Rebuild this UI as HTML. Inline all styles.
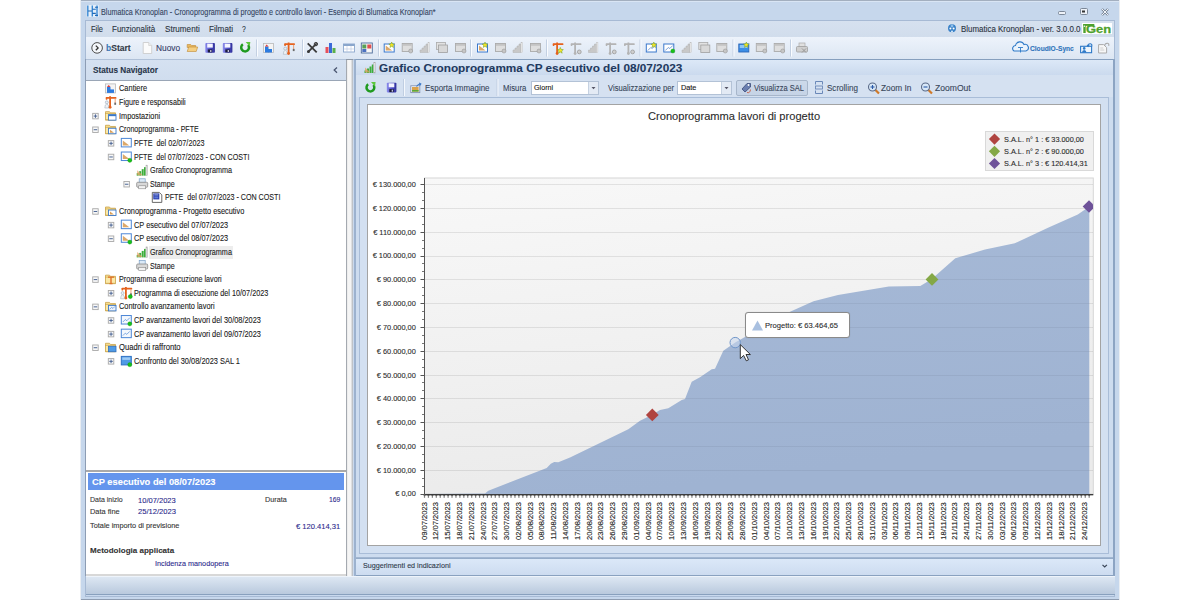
<!DOCTYPE html>
<html><head><meta charset="utf-8"><style>
html,body{margin:0;padding:0;width:1200px;height:600px;overflow:hidden;background:#fff;position:relative;font-family:'Liberation Sans', sans-serif;}
svg{position:absolute;overflow:visible}
</style></head><body>
<div style="position:absolute;left:81px;top:0px;width:1038px;height:600px;background:#c6d7ec;"></div><div style="position:absolute;left:81px;top:0px;width:1038px;height:1px;background:#a3afbf;"></div><div style="position:absolute;left:81px;top:1px;width:1038px;height:1px;background:#d9e5f4;"></div><div style="position:absolute;left:81px;top:599px;width:1038px;height:1px;background:#8e9cb0;"></div><div style="position:absolute;left:80px;top:0px;width:1px;height:600px;background:#e9edf2;"></div><div style="position:absolute;left:1119px;top:0px;width:1px;height:600px;background:#e9edf2;"></div><span style="position:absolute;left:101.00px;top:8.00px;font-family:'Liberation Sans', sans-serif;font-size:8.5px;font-weight:400;color:#34445e;white-space:nowrap;line-height:1;transform-origin:0 0;transform:scaleX(0.8512);-webkit-text-stroke:0.1px #34445e;">Blumatica Kronoplan - Cronoprogramma di progetto e controllo lavori - Esempio di Blumatica Kronoplan*</span><div style="position:absolute;left:85px;top:20px;width:1030px;height:577px;background:#c9d9ee;border:1px solid #a7bad4;box-sizing:border-box;"></div><div style="position:absolute;left:86px;top:21px;width:1028px;height:16px;background:linear-gradient(#d6e1ef,#d1ddec);"></div><span style="position:absolute;left:91.00px;top:25.00px;font-family:'Liberation Sans', sans-serif;font-size:8.3px;font-weight:400;color:#2a3340;white-space:nowrap;line-height:1;transform-origin:0 0;transform:scaleX(0.8972);-webkit-text-stroke:0.1px #2a3340;">File</span><span style="position:absolute;left:112.00px;top:25.00px;font-family:'Liberation Sans', sans-serif;font-size:8.3px;font-weight:400;color:#2a3340;white-space:nowrap;line-height:1;transform-origin:0 0;transform:scaleX(0.9654);-webkit-text-stroke:0.1px #2a3340;">Funzionalità</span><span style="position:absolute;left:164.50px;top:25.00px;font-family:'Liberation Sans', sans-serif;font-size:8.3px;font-weight:400;color:#2a3340;white-space:nowrap;line-height:1;transform-origin:0 0;transform:scaleX(0.9770);-webkit-text-stroke:0.1px #2a3340;">Strumenti</span><span style="position:absolute;left:208.70px;top:25.00px;font-family:'Liberation Sans', sans-serif;font-size:8.3px;font-weight:400;color:#2a3340;white-space:nowrap;line-height:1;transform-origin:0 0;transform:scaleX(0.9821);-webkit-text-stroke:0.1px #2a3340;">Filmati</span><span style="position:absolute;left:241.70px;top:25.00px;font-family:'Liberation Sans', sans-serif;font-size:8.3px;font-weight:400;color:#2a3340;white-space:nowrap;line-height:1;transform-origin:0 0;transform:scaleX(0.8216);-webkit-text-stroke:0.1px #2a3340;">?</span><span style="position:absolute;left:960.80px;top:25.00px;font-family:'Liberation Sans', sans-serif;font-size:8.3px;font-weight:400;color:#2a3340;white-space:nowrap;line-height:1;transform-origin:0 0;transform:scaleX(0.9561);-webkit-text-stroke:0.1px #2a3340;">Blumatica Kronoplan - ver. 3.0.0.0</span><div style="position:absolute;left:1082px;top:23px;width:30px;height:11px;background:#fff;"></div><svg width="1200" height="600" style="left:0;top:0"><rect x="1083.3" y="24" width="2.4" height="9" fill="#4ea12e"/><rect x="1083.3" y="24" width="11" height="1.9" fill="#4ea12e"/><rect x="1083.8" y="25.6" width="1.2" height="1.2" fill="#fff"/></svg><span style="position:absolute;left:1085.80px;top:24.00px;font-family:'Liberation Sans', sans-serif;font-size:11.5px;font-weight:700;color:#4ea12e;white-space:nowrap;line-height:1;transform-origin:0 0;transform:scaleX(1.1263);-webkit-text-stroke:0.1px #4ea12e;-webkit-text-stroke:0.3px #4ea12e;">Gen</span><div style="position:absolute;left:86px;top:37px;width:1028px;height:23px;background:linear-gradient(#edf3fb,#dce6f3);border-bottom:1px solid #b0c1d8;box-sizing:border-box;"></div><span style="position:absolute;left:105.70px;top:44.00px;font-family:'Liberation Sans', sans-serif;font-size:8.5px;font-weight:700;color:#333c48;white-space:nowrap;line-height:1;transform-origin:0 0;transform:scaleX(1.0009);-webkit-text-stroke:0.1px #333c48;"><span style="color:#3c7fc6">b</span>Start</span><span style="position:absolute;left:155.70px;top:44.00px;font-family:'Liberation Sans', sans-serif;font-size:8.5px;font-weight:400;color:#343c66;white-space:nowrap;line-height:1;transform-origin:0 0;transform:scaleX(0.9805);-webkit-text-stroke:0.1px #343c66;">Nuovo</span><span style="position:absolute;left:1030.00px;top:45.00px;font-family:'Liberation Sans', sans-serif;font-size:7px;font-weight:700;color:#2f74bb;white-space:nowrap;line-height:1;transform-origin:0 0;transform:scaleX(0.9464);-webkit-text-stroke:0.1px #2f74bb;">CloudIO-Sync</span><div style="position:absolute;left:86px;top:60px;width:260px;height:21px;background:linear-gradient(#d5e1f1,#d0ddee);border-bottom:1px solid #9aa6b6;box-sizing:border-box;"></div><span style="position:absolute;left:92.70px;top:66.00px;font-family:'Liberation Sans', sans-serif;font-size:8.5px;font-weight:700;color:#27354a;white-space:nowrap;line-height:1;transform-origin:0 0;transform:scaleX(0.9608);-webkit-text-stroke:0.1px #27354a;">Status Navigator</span><div style="position:absolute;left:86px;top:81px;width:260px;height:390px;background:#fff;"></div><div style="position:absolute;left:86px;top:470px;width:260px;height:2px;background:#a9a9a9;"></div><div style="position:absolute;left:86px;top:472px;width:260px;height:103px;background:#fff;"></div><div style="position:absolute;left:88px;top:473px;width:256px;height:17px;background:#6495ed;"></div><span style="position:absolute;left:91.50px;top:477.00px;font-family:'Liberation Sans', sans-serif;font-size:9.5px;font-weight:700;color:#ffffff;white-space:nowrap;line-height:1;transform-origin:0 0;transform:scaleX(0.9798);-webkit-text-stroke:0.1px #ffffff;">CP esecutivo del 08/07/2023</span><span style="position:absolute;left:89.80px;top:496.00px;font-family:'Liberation Sans', sans-serif;font-size:7.5px;font-weight:400;color:#333;white-space:nowrap;line-height:1;transform-origin:0 0;transform:scaleX(0.9335);-webkit-text-stroke:0.1px #333;">Data inizio</span><span style="position:absolute;left:138.00px;top:497.00px;font-family:'Liberation Sans', sans-serif;font-size:7.5px;font-weight:400;color:#2b2a8c;white-space:nowrap;line-height:1;transform-origin:0 0;transform:scaleX(1.0041);-webkit-text-stroke:0.1px #2b2a8c;">10/07/2023</span><span style="position:absolute;left:264.90px;top:496.00px;font-family:'Liberation Sans', sans-serif;font-size:7.5px;font-weight:400;color:#333;white-space:nowrap;line-height:1;transform-origin:0 0;transform:scaleX(0.9638);-webkit-text-stroke:0.1px #333;">Durata</span><span style="position:absolute;left:328.60px;top:496.00px;font-family:'Liberation Sans', sans-serif;font-size:7.5px;font-weight:400;color:#2b2a8c;white-space:nowrap;line-height:1;transform-origin:0 0;transform:scaleX(0.9109);-webkit-text-stroke:0.1px #2b2a8c;">169</span><span style="position:absolute;left:89.80px;top:508.00px;font-family:'Liberation Sans', sans-serif;font-size:7.5px;font-weight:400;color:#333;white-space:nowrap;line-height:1;transform-origin:0 0;transform:scaleX(0.9890);-webkit-text-stroke:0.1px #333;">Data fine</span><span style="position:absolute;left:137.70px;top:508.00px;font-family:'Liberation Sans', sans-serif;font-size:7.5px;font-weight:400;color:#2b2a8c;white-space:nowrap;line-height:1;transform-origin:0 0;transform:scaleX(1.0121);-webkit-text-stroke:0.1px #2b2a8c;">25/12/2023</span><span style="position:absolute;left:89.80px;top:522.00px;font-family:'Liberation Sans', sans-serif;font-size:7.5px;font-weight:400;color:#333;white-space:nowrap;line-height:1;transform-origin:0 0;transform:scaleX(0.9792);-webkit-text-stroke:0.1px #333;">Totale importo di previsione</span><span style="position:absolute;left:295.90px;top:523.00px;font-family:'Liberation Sans', sans-serif;font-size:7.5px;font-weight:400;color:#2b2a8c;white-space:nowrap;line-height:1;transform-origin:0 0;transform:scaleX(1.0069);-webkit-text-stroke:0.1px #2b2a8c;">€ 120.414,31</span><span style="position:absolute;left:90.30px;top:547.00px;font-family:'Liberation Sans', sans-serif;font-size:8px;font-weight:700;color:#333;white-space:nowrap;line-height:1;transform-origin:0 0;transform:scaleX(1.0022);-webkit-text-stroke:0.1px #333;">Metodologia applicata</span><span style="position:absolute;left:154.50px;top:560.00px;font-family:'Liberation Sans', sans-serif;font-size:7.5px;font-weight:400;color:#2b2a8c;white-space:nowrap;line-height:1;transform-origin:0 0;transform:scaleX(0.9658);-webkit-text-stroke:0.1px #2b2a8c;">Incidenza manodopera</span><div style="position:absolute;left:86px;top:574px;width:260px;height:2px;background:#d8d8d8;"></div><div style="position:absolute;left:85px;top:59px;width:1px;height:517px;background:#8d9db4;"></div><div style="position:absolute;left:346px;top:59px;width:7px;height:517px;background:linear-gradient(90deg,#a4a9b0 0,#a4a9b0 1px,#e4e4e4 1px,#f6f6f6 2px,#f4f4f4 5px,#c6c9cd 6px,#b8bcc2 7px);border-top:1px solid #8e98a6;box-sizing:border-box;"></div><div style="position:absolute;left:354px;top:59px;width:760px;height:518px;background:#cddcef;border-left:2px solid #9cb2cf;border-top:1px solid #869fbe;box-sizing:border-box;"></div><div style="position:absolute;left:356px;top:60px;width:758px;height:16px;background:linear-gradient(#dce8f7,#cbdaee);border-bottom:1px solid #aabdd6;box-sizing:border-box;"></div><span style="position:absolute;left:378.70px;top:63.00px;font-family:'Liberation Sans', sans-serif;font-size:11.5px;font-weight:700;color:#1f3a5f;white-space:nowrap;line-height:1;transform-origin:0 0;transform:scaleX(1.0234);-webkit-text-stroke:0.1px #1f3a5f;">Grafico Cronoprogramma CP esecutivo del 08/07/2023</span><div style="position:absolute;left:356px;top:75px;width:758px;height:22px;background:#d5e1f1;"></div><span style="position:absolute;left:424.50px;top:84.00px;font-family:'Liberation Sans', sans-serif;font-size:8.3px;font-weight:400;color:#38465a;white-space:nowrap;line-height:1;transform-origin:0 0;transform:scaleX(0.9580);-webkit-text-stroke:0.1px #38465a;">Esporta Immagine</span><span style="position:absolute;left:503.30px;top:84.00px;font-family:'Liberation Sans', sans-serif;font-size:8.3px;font-weight:400;color:#38465a;white-space:nowrap;line-height:1;transform-origin:0 0;transform:scaleX(0.9395);-webkit-text-stroke:0.1px #38465a;">Misura</span><span style="position:absolute;left:607.60px;top:84.00px;font-family:'Liberation Sans', sans-serif;font-size:8.3px;font-weight:400;color:#38465a;white-space:nowrap;line-height:1;transform-origin:0 0;transform:scaleX(0.9251);-webkit-text-stroke:0.1px #38465a;">Visualizzazione per</span><div style="position:absolute;left:531px;top:81px;width:68px;height:14px;background:#fff;border:1px solid #b3c2d6;box-sizing:border-box;"></div><div style="position:absolute;left:588px;top:82px;width:10px;height:12px;background:#e3eaf4;border-left:1px solid #c5d1e1;box-sizing:border-box;"></div><span style="position:absolute;left:533.80px;top:84.00px;font-family:'Liberation Sans', sans-serif;font-size:7.5px;font-weight:400;color:#111;white-space:nowrap;line-height:1;transform-origin:0 0;transform:scaleX(0.9543);-webkit-text-stroke:0.1px #111;">Giorni</span><div style="position:absolute;left:677px;top:81px;width:55px;height:14px;background:#fff;border:1px solid #b3c2d6;box-sizing:border-box;"></div><div style="position:absolute;left:721px;top:82px;width:10px;height:12px;background:#e3eaf4;border-left:1px solid #c5d1e1;box-sizing:border-box;"></div><span style="position:absolute;left:680.60px;top:84.00px;font-family:'Liberation Sans', sans-serif;font-size:7.5px;font-weight:400;color:#111;white-space:nowrap;line-height:1;transform-origin:0 0;transform:scaleX(0.9720);-webkit-text-stroke:0.1px #111;">Date</span><div style="position:absolute;left:736px;top:80px;width:72px;height:16px;background:linear-gradient(#ccd9ea,#c5d3e6);border:1px solid #a7b6ca;border-radius:2px;box-sizing:border-box;"></div><span style="position:absolute;left:753.80px;top:84.00px;font-family:'Liberation Sans', sans-serif;font-size:8.3px;font-weight:400;color:#38465a;white-space:nowrap;line-height:1;transform-origin:0 0;transform:scaleX(0.9039);-webkit-text-stroke:0.1px #38465a;">Visualizza SAL</span><span style="position:absolute;left:826.90px;top:84.00px;font-family:'Liberation Sans', sans-serif;font-size:8.3px;font-weight:400;color:#38465a;white-space:nowrap;line-height:1;transform-origin:0 0;transform:scaleX(0.9708);-webkit-text-stroke:0.1px #38465a;">Scrolling</span><span style="position:absolute;left:881.20px;top:84.00px;font-family:'Liberation Sans', sans-serif;font-size:8.3px;font-weight:400;color:#38465a;white-space:nowrap;line-height:1;transform-origin:0 0;transform:scaleX(0.9988);-webkit-text-stroke:0.1px #38465a;">Zoom In</span><span style="position:absolute;left:934.80px;top:84.00px;font-family:'Liberation Sans', sans-serif;font-size:8.3px;font-weight:400;color:#38465a;white-space:nowrap;line-height:1;transform-origin:0 0;transform:scaleX(1.0320);-webkit-text-stroke:0.1px #38465a;">ZoomOut</span><div style="position:absolute;left:1113px;top:59px;width:2px;height:518px;background:#8ca4c3;"></div><div style="position:absolute;left:359px;top:97px;width:750px;height:457px;background:#d3e0f1;border:1px solid #a9bdd8;box-sizing:border-box;"></div><div style="position:absolute;left:367px;top:104px;width:734px;height:442px;background:#fff;border:1px solid #a3a3a3;box-sizing:border-box;"></div><div style="position:absolute;left:356px;top:557px;width:757px;height:2px;background:linear-gradient(#a9bcd6,#8ea6c4);"></div><div style="position:absolute;left:356px;top:559px;width:757px;height:17px;background:linear-gradient(#dbe8f8,#cddcf0);border-bottom:1px solid #8aa2c0;box-sizing:border-box;"></div><span style="position:absolute;left:362.80px;top:562.00px;font-family:'Liberation Sans', sans-serif;font-size:8px;font-weight:400;color:#2b3748;white-space:nowrap;line-height:1;transform-origin:0 0;transform:scaleX(0.8943);-webkit-text-stroke:0.1px #2b3748;">Suggerimenti ed indicazioni</span><div style="position:absolute;left:86px;top:576px;width:1029px;height:19px;background:linear-gradient(#eef4fb 0,#eef4fb 1px,#dde7f3 1px,#b9c9dd 18px,#88a0bd 18px);"></div><svg width="1200" height="600" style="left:0;top:0"><defs><linearGradient id="pbg" x1="0" y1="0" x2="0.25" y2="1"><stop offset="0" stop-color="#f8f8f8"/><stop offset="1" stop-color="#ebebeb"/></linearGradient><linearGradient id="area" x1="0" y1="0" x2="0.3" y2="1"><stop offset="0" stop-color="#a7bad7"/><stop offset="1" stop-color="#9fb3d2"/></linearGradient></defs><rect x="424.5" y="178" width="668.8" height="316" fill="url(#pbg)" stroke="#d6d6d6" stroke-width="1"/><line x1="424.5" y1="470.5" x2="1093" y2="470.5" stroke="#000" stroke-opacity="0.085" stroke-width="1"/><line x1="424.5" y1="446.5" x2="1093" y2="446.5" stroke="#000" stroke-opacity="0.085" stroke-width="1"/><line x1="424.5" y1="422.5" x2="1093" y2="422.5" stroke="#000" stroke-opacity="0.085" stroke-width="1"/><line x1="424.5" y1="398.5" x2="1093" y2="398.5" stroke="#000" stroke-opacity="0.085" stroke-width="1"/><line x1="424.5" y1="375.5" x2="1093" y2="375.5" stroke="#000" stroke-opacity="0.085" stroke-width="1"/><line x1="424.5" y1="351.5" x2="1093" y2="351.5" stroke="#000" stroke-opacity="0.085" stroke-width="1"/><line x1="424.5" y1="327.5" x2="1093" y2="327.5" stroke="#000" stroke-opacity="0.085" stroke-width="1"/><line x1="424.5" y1="303.5" x2="1093" y2="303.5" stroke="#000" stroke-opacity="0.085" stroke-width="1"/><line x1="424.5" y1="279.5" x2="1093" y2="279.5" stroke="#000" stroke-opacity="0.085" stroke-width="1"/><line x1="424.5" y1="256.5" x2="1093" y2="256.5" stroke="#000" stroke-opacity="0.085" stroke-width="1"/><line x1="424.5" y1="232.5" x2="1093" y2="232.5" stroke="#000" stroke-opacity="0.085" stroke-width="1"/><line x1="424.5" y1="208.5" x2="1093" y2="208.5" stroke="#000" stroke-opacity="0.085" stroke-width="1"/><line x1="424.5" y1="184.5" x2="1093" y2="184.5" stroke="#000" stroke-opacity="0.085" stroke-width="1"/><path d="M424.5,494 L485,493.6 L488.3,490.7 L546.7,468 L550.8,463.7 L554.2,462 L558.3,462.2 L570,457.5 L628.3,429.2 L640,420.8 L651.7,415 L660,410 L668.3,408.3 L681.7,400 L685,399 L691.7,381.7 L700,377.3 L711.7,369.3 L715,368.7 L723.3,350.7 L735.2,342.6 L744.5,337.3 L790,311.7 L813.5,301.3 L838,295 L888.8,286.6 L920.3,285.9 L931.5,279.3 L955.3,258.3 L985,249.5 L1014.8,243.2 L1048,227.8 L1077.8,214.5 L1088.3,207.3 L1089.3,207.3 L1089.3,494 Z" fill="url(#area)"/><clipPath id="aclip"><path d="M424.5,494 L485,493.6 L488.3,490.7 L546.7,468 L550.8,463.7 L554.2,462 L558.3,462.2 L570,457.5 L628.3,429.2 L640,420.8 L651.7,415 L660,410 L668.3,408.3 L681.7,400 L685,399 L691.7,381.7 L700,377.3 L711.7,369.3 L715,368.7 L723.3,350.7 L735.2,342.6 L744.5,337.3 L790,311.7 L813.5,301.3 L838,295 L888.8,286.6 L920.3,285.9 L931.5,279.3 L955.3,258.3 L985,249.5 L1014.8,243.2 L1048,227.8 L1077.8,214.5 L1088.3,207.3 L1089.3,207.3 L1089.3,494 Z"/></clipPath><g clip-path="url(#aclip)"><line x1="424.5" y1="470.5" x2="1093" y2="470.5" stroke="#000" stroke-opacity="0.05" stroke-width="1"/><line x1="424.5" y1="446.5" x2="1093" y2="446.5" stroke="#000" stroke-opacity="0.05" stroke-width="1"/><line x1="424.5" y1="422.5" x2="1093" y2="422.5" stroke="#000" stroke-opacity="0.05" stroke-width="1"/><line x1="424.5" y1="398.5" x2="1093" y2="398.5" stroke="#000" stroke-opacity="0.05" stroke-width="1"/><line x1="424.5" y1="375.5" x2="1093" y2="375.5" stroke="#000" stroke-opacity="0.05" stroke-width="1"/><line x1="424.5" y1="351.5" x2="1093" y2="351.5" stroke="#000" stroke-opacity="0.05" stroke-width="1"/><line x1="424.5" y1="327.5" x2="1093" y2="327.5" stroke="#000" stroke-opacity="0.05" stroke-width="1"/><line x1="424.5" y1="303.5" x2="1093" y2="303.5" stroke="#000" stroke-opacity="0.05" stroke-width="1"/><line x1="424.5" y1="279.5" x2="1093" y2="279.5" stroke="#000" stroke-opacity="0.05" stroke-width="1"/><line x1="424.5" y1="256.5" x2="1093" y2="256.5" stroke="#000" stroke-opacity="0.05" stroke-width="1"/><line x1="424.5" y1="232.5" x2="1093" y2="232.5" stroke="#000" stroke-opacity="0.05" stroke-width="1"/><line x1="424.5" y1="208.5" x2="1093" y2="208.5" stroke="#000" stroke-opacity="0.05" stroke-width="1"/><line x1="424.5" y1="184.5" x2="1093" y2="184.5" stroke="#000" stroke-opacity="0.05" stroke-width="1"/></g><line x1="420.5" y1="494.5" x2="424.5" y2="494.5" stroke="#555" stroke-width="1"/><line x1="422" y1="486.5" x2="424.5" y2="486.5" stroke="#777" stroke-width="1"/><line x1="422" y1="478.5" x2="424.5" y2="478.5" stroke="#777" stroke-width="1"/><line x1="420.5" y1="470.5" x2="424.5" y2="470.5" stroke="#555" stroke-width="1"/><line x1="422" y1="462.5" x2="424.5" y2="462.5" stroke="#777" stroke-width="1"/><line x1="422" y1="454.5" x2="424.5" y2="454.5" stroke="#777" stroke-width="1"/><line x1="420.5" y1="446.5" x2="424.5" y2="446.5" stroke="#555" stroke-width="1"/><line x1="422" y1="438.5" x2="424.5" y2="438.5" stroke="#777" stroke-width="1"/><line x1="422" y1="430.5" x2="424.5" y2="430.5" stroke="#777" stroke-width="1"/><line x1="420.5" y1="422.5" x2="424.5" y2="422.5" stroke="#555" stroke-width="1"/><line x1="422" y1="414.5" x2="424.5" y2="414.5" stroke="#777" stroke-width="1"/><line x1="422" y1="406.5" x2="424.5" y2="406.5" stroke="#777" stroke-width="1"/><line x1="420.5" y1="398.5" x2="424.5" y2="398.5" stroke="#555" stroke-width="1"/><line x1="422" y1="390.5" x2="424.5" y2="390.5" stroke="#777" stroke-width="1"/><line x1="422" y1="382.5" x2="424.5" y2="382.5" stroke="#777" stroke-width="1"/><line x1="420.5" y1="375.5" x2="424.5" y2="375.5" stroke="#555" stroke-width="1"/><line x1="422" y1="367.5" x2="424.5" y2="367.5" stroke="#777" stroke-width="1"/><line x1="422" y1="359.5" x2="424.5" y2="359.5" stroke="#777" stroke-width="1"/><line x1="420.5" y1="351.5" x2="424.5" y2="351.5" stroke="#555" stroke-width="1"/><line x1="422" y1="343.5" x2="424.5" y2="343.5" stroke="#777" stroke-width="1"/><line x1="422" y1="335.5" x2="424.5" y2="335.5" stroke="#777" stroke-width="1"/><line x1="420.5" y1="327.5" x2="424.5" y2="327.5" stroke="#555" stroke-width="1"/><line x1="422" y1="319.5" x2="424.5" y2="319.5" stroke="#777" stroke-width="1"/><line x1="422" y1="311.5" x2="424.5" y2="311.5" stroke="#777" stroke-width="1"/><line x1="420.5" y1="303.5" x2="424.5" y2="303.5" stroke="#555" stroke-width="1"/><line x1="422" y1="295.5" x2="424.5" y2="295.5" stroke="#777" stroke-width="1"/><line x1="422" y1="287.5" x2="424.5" y2="287.5" stroke="#777" stroke-width="1"/><line x1="420.5" y1="279.5" x2="424.5" y2="279.5" stroke="#555" stroke-width="1"/><line x1="422" y1="271.5" x2="424.5" y2="271.5" stroke="#777" stroke-width="1"/><line x1="422" y1="263.5" x2="424.5" y2="263.5" stroke="#777" stroke-width="1"/><line x1="420.5" y1="256.5" x2="424.5" y2="256.5" stroke="#555" stroke-width="1"/><line x1="422" y1="248.5" x2="424.5" y2="248.5" stroke="#777" stroke-width="1"/><line x1="422" y1="240.5" x2="424.5" y2="240.5" stroke="#777" stroke-width="1"/><line x1="420.5" y1="232.5" x2="424.5" y2="232.5" stroke="#555" stroke-width="1"/><line x1="422" y1="224.5" x2="424.5" y2="224.5" stroke="#777" stroke-width="1"/><line x1="422" y1="216.5" x2="424.5" y2="216.5" stroke="#777" stroke-width="1"/><line x1="420.5" y1="208.5" x2="424.5" y2="208.5" stroke="#555" stroke-width="1"/><line x1="422" y1="200.5" x2="424.5" y2="200.5" stroke="#777" stroke-width="1"/><line x1="422" y1="192.5" x2="424.5" y2="192.5" stroke="#777" stroke-width="1"/><line x1="420.5" y1="184.5" x2="424.5" y2="184.5" stroke="#555" stroke-width="1"/><rect x="423.60" y="495" width="1.8" height="1" fill="#444" fill-opacity="0.8"/><rect x="423.90" y="496" width="1.2" height="1.8" fill="#6a6a6a" fill-opacity="0.85"/><rect x="427.53" y="495" width="1.8" height="1" fill="#444" fill-opacity="0.8"/><rect x="427.83" y="496" width="1.2" height="1.8" fill="#6a6a6a" fill-opacity="0.85"/><rect x="431.47" y="495" width="1.8" height="1" fill="#444" fill-opacity="0.8"/><rect x="431.77" y="496" width="1.2" height="1.8" fill="#6a6a6a" fill-opacity="0.85"/><rect x="435.40" y="495" width="1.8" height="1" fill="#444" fill-opacity="0.8"/><rect x="435.70" y="496" width="1.2" height="1.8" fill="#6a6a6a" fill-opacity="0.85"/><rect x="439.33" y="495" width="1.8" height="1" fill="#444" fill-opacity="0.8"/><rect x="439.63" y="496" width="1.2" height="1.8" fill="#6a6a6a" fill-opacity="0.85"/><rect x="443.27" y="495" width="1.8" height="1" fill="#444" fill-opacity="0.8"/><rect x="443.56" y="496" width="1.2" height="1.8" fill="#6a6a6a" fill-opacity="0.85"/><rect x="447.20" y="495" width="1.8" height="1" fill="#444" fill-opacity="0.8"/><rect x="447.50" y="496" width="1.2" height="1.8" fill="#6a6a6a" fill-opacity="0.85"/><rect x="451.13" y="495" width="1.8" height="1" fill="#444" fill-opacity="0.8"/><rect x="451.43" y="496" width="1.2" height="1.8" fill="#6a6a6a" fill-opacity="0.85"/><rect x="455.06" y="495" width="1.8" height="1" fill="#444" fill-opacity="0.8"/><rect x="455.36" y="496" width="1.2" height="1.8" fill="#6a6a6a" fill-opacity="0.85"/><rect x="459.00" y="495" width="1.8" height="1" fill="#444" fill-opacity="0.8"/><rect x="459.30" y="496" width="1.2" height="1.8" fill="#6a6a6a" fill-opacity="0.85"/><rect x="462.93" y="495" width="1.8" height="1" fill="#444" fill-opacity="0.8"/><rect x="463.23" y="496" width="1.2" height="1.8" fill="#6a6a6a" fill-opacity="0.85"/><rect x="466.86" y="495" width="1.8" height="1" fill="#444" fill-opacity="0.8"/><rect x="467.16" y="496" width="1.2" height="1.8" fill="#6a6a6a" fill-opacity="0.85"/><rect x="470.80" y="495" width="1.8" height="1" fill="#444" fill-opacity="0.8"/><rect x="471.10" y="496" width="1.2" height="1.8" fill="#6a6a6a" fill-opacity="0.85"/><rect x="474.73" y="495" width="1.8" height="1" fill="#444" fill-opacity="0.8"/><rect x="475.03" y="496" width="1.2" height="1.8" fill="#6a6a6a" fill-opacity="0.85"/><rect x="478.66" y="495" width="1.8" height="1" fill="#444" fill-opacity="0.8"/><rect x="478.96" y="496" width="1.2" height="1.8" fill="#6a6a6a" fill-opacity="0.85"/><rect x="482.60" y="495" width="1.8" height="1" fill="#444" fill-opacity="0.8"/><rect x="482.89" y="496" width="1.2" height="1.8" fill="#6a6a6a" fill-opacity="0.85"/><rect x="486.53" y="495" width="1.8" height="1" fill="#444" fill-opacity="0.8"/><rect x="486.83" y="496" width="1.2" height="1.8" fill="#6a6a6a" fill-opacity="0.85"/><rect x="490.46" y="495" width="1.8" height="1" fill="#444" fill-opacity="0.8"/><rect x="490.76" y="496" width="1.2" height="1.8" fill="#6a6a6a" fill-opacity="0.85"/><rect x="494.39" y="495" width="1.8" height="1" fill="#444" fill-opacity="0.8"/><rect x="494.69" y="496" width="1.2" height="1.8" fill="#6a6a6a" fill-opacity="0.85"/><rect x="498.33" y="495" width="1.8" height="1" fill="#444" fill-opacity="0.8"/><rect x="498.63" y="496" width="1.2" height="1.8" fill="#6a6a6a" fill-opacity="0.85"/><rect x="502.26" y="495" width="1.8" height="1" fill="#444" fill-opacity="0.8"/><rect x="502.56" y="496" width="1.2" height="1.8" fill="#6a6a6a" fill-opacity="0.85"/><rect x="506.19" y="495" width="1.8" height="1" fill="#444" fill-opacity="0.8"/><rect x="506.49" y="496" width="1.2" height="1.8" fill="#6a6a6a" fill-opacity="0.85"/><rect x="510.13" y="495" width="1.8" height="1" fill="#444" fill-opacity="0.8"/><rect x="510.43" y="496" width="1.2" height="1.8" fill="#6a6a6a" fill-opacity="0.85"/><rect x="514.06" y="495" width="1.8" height="1" fill="#444" fill-opacity="0.8"/><rect x="514.36" y="496" width="1.2" height="1.8" fill="#6a6a6a" fill-opacity="0.85"/><rect x="517.99" y="495" width="1.8" height="1" fill="#444" fill-opacity="0.8"/><rect x="518.29" y="496" width="1.2" height="1.8" fill="#6a6a6a" fill-opacity="0.85"/><rect x="521.93" y="495" width="1.8" height="1" fill="#444" fill-opacity="0.8"/><rect x="522.23" y="496" width="1.2" height="1.8" fill="#6a6a6a" fill-opacity="0.85"/><rect x="525.86" y="495" width="1.8" height="1" fill="#444" fill-opacity="0.8"/><rect x="526.16" y="496" width="1.2" height="1.8" fill="#6a6a6a" fill-opacity="0.85"/><rect x="529.79" y="495" width="1.8" height="1" fill="#444" fill-opacity="0.8"/><rect x="530.09" y="496" width="1.2" height="1.8" fill="#6a6a6a" fill-opacity="0.85"/><rect x="533.72" y="495" width="1.8" height="1" fill="#444" fill-opacity="0.8"/><rect x="534.02" y="496" width="1.2" height="1.8" fill="#6a6a6a" fill-opacity="0.85"/><rect x="537.66" y="495" width="1.8" height="1" fill="#444" fill-opacity="0.8"/><rect x="537.96" y="496" width="1.2" height="1.8" fill="#6a6a6a" fill-opacity="0.85"/><rect x="541.59" y="495" width="1.8" height="1" fill="#444" fill-opacity="0.8"/><rect x="541.89" y="496" width="1.2" height="1.8" fill="#6a6a6a" fill-opacity="0.85"/><rect x="545.52" y="495" width="1.8" height="1" fill="#444" fill-opacity="0.8"/><rect x="545.82" y="496" width="1.2" height="1.8" fill="#6a6a6a" fill-opacity="0.85"/><rect x="549.46" y="495" width="1.8" height="1" fill="#444" fill-opacity="0.8"/><rect x="549.76" y="496" width="1.2" height="1.8" fill="#6a6a6a" fill-opacity="0.85"/><rect x="553.39" y="495" width="1.8" height="1" fill="#444" fill-opacity="0.8"/><rect x="553.69" y="496" width="1.2" height="1.8" fill="#6a6a6a" fill-opacity="0.85"/><rect x="557.32" y="495" width="1.8" height="1" fill="#444" fill-opacity="0.8"/><rect x="557.62" y="496" width="1.2" height="1.8" fill="#6a6a6a" fill-opacity="0.85"/><rect x="561.25" y="495" width="1.8" height="1" fill="#444" fill-opacity="0.8"/><rect x="561.55" y="496" width="1.2" height="1.8" fill="#6a6a6a" fill-opacity="0.85"/><rect x="565.19" y="495" width="1.8" height="1" fill="#444" fill-opacity="0.8"/><rect x="565.49" y="496" width="1.2" height="1.8" fill="#6a6a6a" fill-opacity="0.85"/><rect x="569.12" y="495" width="1.8" height="1" fill="#444" fill-opacity="0.8"/><rect x="569.42" y="496" width="1.2" height="1.8" fill="#6a6a6a" fill-opacity="0.85"/><rect x="573.05" y="495" width="1.8" height="1" fill="#444" fill-opacity="0.8"/><rect x="573.35" y="496" width="1.2" height="1.8" fill="#6a6a6a" fill-opacity="0.85"/><rect x="576.99" y="495" width="1.8" height="1" fill="#444" fill-opacity="0.8"/><rect x="577.29" y="496" width="1.2" height="1.8" fill="#6a6a6a" fill-opacity="0.85"/><rect x="580.92" y="495" width="1.8" height="1" fill="#444" fill-opacity="0.8"/><rect x="581.22" y="496" width="1.2" height="1.8" fill="#6a6a6a" fill-opacity="0.85"/><rect x="584.85" y="495" width="1.8" height="1" fill="#444" fill-opacity="0.8"/><rect x="585.15" y="496" width="1.2" height="1.8" fill="#6a6a6a" fill-opacity="0.85"/><rect x="588.79" y="495" width="1.8" height="1" fill="#444" fill-opacity="0.8"/><rect x="589.09" y="496" width="1.2" height="1.8" fill="#6a6a6a" fill-opacity="0.85"/><rect x="592.72" y="495" width="1.8" height="1" fill="#444" fill-opacity="0.8"/><rect x="593.02" y="496" width="1.2" height="1.8" fill="#6a6a6a" fill-opacity="0.85"/><rect x="596.65" y="495" width="1.8" height="1" fill="#444" fill-opacity="0.8"/><rect x="596.95" y="496" width="1.2" height="1.8" fill="#6a6a6a" fill-opacity="0.85"/><rect x="600.59" y="495" width="1.8" height="1" fill="#444" fill-opacity="0.8"/><rect x="600.88" y="496" width="1.2" height="1.8" fill="#6a6a6a" fill-opacity="0.85"/><rect x="604.52" y="495" width="1.8" height="1" fill="#444" fill-opacity="0.8"/><rect x="604.82" y="496" width="1.2" height="1.8" fill="#6a6a6a" fill-opacity="0.85"/><rect x="608.45" y="495" width="1.8" height="1" fill="#444" fill-opacity="0.8"/><rect x="608.75" y="496" width="1.2" height="1.8" fill="#6a6a6a" fill-opacity="0.85"/><rect x="612.38" y="495" width="1.8" height="1" fill="#444" fill-opacity="0.8"/><rect x="612.68" y="496" width="1.2" height="1.8" fill="#6a6a6a" fill-opacity="0.85"/><rect x="616.32" y="495" width="1.8" height="1" fill="#444" fill-opacity="0.8"/><rect x="616.62" y="496" width="1.2" height="1.8" fill="#6a6a6a" fill-opacity="0.85"/><rect x="620.25" y="495" width="1.8" height="1" fill="#444" fill-opacity="0.8"/><rect x="620.55" y="496" width="1.2" height="1.8" fill="#6a6a6a" fill-opacity="0.85"/><rect x="624.18" y="495" width="1.8" height="1" fill="#444" fill-opacity="0.8"/><rect x="624.48" y="496" width="1.2" height="1.8" fill="#6a6a6a" fill-opacity="0.85"/><rect x="628.12" y="495" width="1.8" height="1" fill="#444" fill-opacity="0.8"/><rect x="628.42" y="496" width="1.2" height="1.8" fill="#6a6a6a" fill-opacity="0.85"/><rect x="632.05" y="495" width="1.8" height="1" fill="#444" fill-opacity="0.8"/><rect x="632.35" y="496" width="1.2" height="1.8" fill="#6a6a6a" fill-opacity="0.85"/><rect x="635.98" y="495" width="1.8" height="1" fill="#444" fill-opacity="0.8"/><rect x="636.28" y="496" width="1.2" height="1.8" fill="#6a6a6a" fill-opacity="0.85"/><rect x="639.92" y="495" width="1.8" height="1" fill="#444" fill-opacity="0.8"/><rect x="640.22" y="496" width="1.2" height="1.8" fill="#6a6a6a" fill-opacity="0.85"/><rect x="643.85" y="495" width="1.8" height="1" fill="#444" fill-opacity="0.8"/><rect x="644.15" y="496" width="1.2" height="1.8" fill="#6a6a6a" fill-opacity="0.85"/><rect x="647.78" y="495" width="1.8" height="1" fill="#444" fill-opacity="0.8"/><rect x="648.08" y="496" width="1.2" height="1.8" fill="#6a6a6a" fill-opacity="0.85"/><rect x="651.71" y="495" width="1.8" height="1" fill="#444" fill-opacity="0.8"/><rect x="652.01" y="496" width="1.2" height="1.8" fill="#6a6a6a" fill-opacity="0.85"/><rect x="655.65" y="495" width="1.8" height="1" fill="#444" fill-opacity="0.8"/><rect x="655.95" y="496" width="1.2" height="1.8" fill="#6a6a6a" fill-opacity="0.85"/><rect x="659.58" y="495" width="1.8" height="1" fill="#444" fill-opacity="0.8"/><rect x="659.88" y="496" width="1.2" height="1.8" fill="#6a6a6a" fill-opacity="0.85"/><rect x="663.51" y="495" width="1.8" height="1" fill="#444" fill-opacity="0.8"/><rect x="663.81" y="496" width="1.2" height="1.8" fill="#6a6a6a" fill-opacity="0.85"/><rect x="667.45" y="495" width="1.8" height="1" fill="#444" fill-opacity="0.8"/><rect x="667.75" y="496" width="1.2" height="1.8" fill="#6a6a6a" fill-opacity="0.85"/><rect x="671.38" y="495" width="1.8" height="1" fill="#444" fill-opacity="0.8"/><rect x="671.68" y="496" width="1.2" height="1.8" fill="#6a6a6a" fill-opacity="0.85"/><rect x="675.31" y="495" width="1.8" height="1" fill="#444" fill-opacity="0.8"/><rect x="675.61" y="496" width="1.2" height="1.8" fill="#6a6a6a" fill-opacity="0.85"/><rect x="679.25" y="495" width="1.8" height="1" fill="#444" fill-opacity="0.8"/><rect x="679.54" y="496" width="1.2" height="1.8" fill="#6a6a6a" fill-opacity="0.85"/><rect x="683.18" y="495" width="1.8" height="1" fill="#444" fill-opacity="0.8"/><rect x="683.48" y="496" width="1.2" height="1.8" fill="#6a6a6a" fill-opacity="0.85"/><rect x="687.11" y="495" width="1.8" height="1" fill="#444" fill-opacity="0.8"/><rect x="687.41" y="496" width="1.2" height="1.8" fill="#6a6a6a" fill-opacity="0.85"/><rect x="691.04" y="495" width="1.8" height="1" fill="#444" fill-opacity="0.8"/><rect x="691.34" y="496" width="1.2" height="1.8" fill="#6a6a6a" fill-opacity="0.85"/><rect x="694.98" y="495" width="1.8" height="1" fill="#444" fill-opacity="0.8"/><rect x="695.28" y="496" width="1.2" height="1.8" fill="#6a6a6a" fill-opacity="0.85"/><rect x="698.91" y="495" width="1.8" height="1" fill="#444" fill-opacity="0.8"/><rect x="699.21" y="496" width="1.2" height="1.8" fill="#6a6a6a" fill-opacity="0.85"/><rect x="702.84" y="495" width="1.8" height="1" fill="#444" fill-opacity="0.8"/><rect x="703.14" y="496" width="1.2" height="1.8" fill="#6a6a6a" fill-opacity="0.85"/><rect x="706.78" y="495" width="1.8" height="1" fill="#444" fill-opacity="0.8"/><rect x="707.08" y="496" width="1.2" height="1.8" fill="#6a6a6a" fill-opacity="0.85"/><rect x="710.71" y="495" width="1.8" height="1" fill="#444" fill-opacity="0.8"/><rect x="711.01" y="496" width="1.2" height="1.8" fill="#6a6a6a" fill-opacity="0.85"/><rect x="714.64" y="495" width="1.8" height="1" fill="#444" fill-opacity="0.8"/><rect x="714.94" y="496" width="1.2" height="1.8" fill="#6a6a6a" fill-opacity="0.85"/><rect x="718.57" y="495" width="1.8" height="1" fill="#444" fill-opacity="0.8"/><rect x="718.87" y="496" width="1.2" height="1.8" fill="#6a6a6a" fill-opacity="0.85"/><rect x="722.51" y="495" width="1.8" height="1" fill="#444" fill-opacity="0.8"/><rect x="722.81" y="496" width="1.2" height="1.8" fill="#6a6a6a" fill-opacity="0.85"/><rect x="726.44" y="495" width="1.8" height="1" fill="#444" fill-opacity="0.8"/><rect x="726.74" y="496" width="1.2" height="1.8" fill="#6a6a6a" fill-opacity="0.85"/><rect x="730.37" y="495" width="1.8" height="1" fill="#444" fill-opacity="0.8"/><rect x="730.67" y="496" width="1.2" height="1.8" fill="#6a6a6a" fill-opacity="0.85"/><rect x="734.31" y="495" width="1.8" height="1" fill="#444" fill-opacity="0.8"/><rect x="734.61" y="496" width="1.2" height="1.8" fill="#6a6a6a" fill-opacity="0.85"/><rect x="738.24" y="495" width="1.8" height="1" fill="#444" fill-opacity="0.8"/><rect x="738.54" y="496" width="1.2" height="1.8" fill="#6a6a6a" fill-opacity="0.85"/><rect x="742.17" y="495" width="1.8" height="1" fill="#444" fill-opacity="0.8"/><rect x="742.47" y="496" width="1.2" height="1.8" fill="#6a6a6a" fill-opacity="0.85"/><rect x="746.11" y="495" width="1.8" height="1" fill="#444" fill-opacity="0.8"/><rect x="746.41" y="496" width="1.2" height="1.8" fill="#6a6a6a" fill-opacity="0.85"/><rect x="750.04" y="495" width="1.8" height="1" fill="#444" fill-opacity="0.8"/><rect x="750.34" y="496" width="1.2" height="1.8" fill="#6a6a6a" fill-opacity="0.85"/><rect x="753.97" y="495" width="1.8" height="1" fill="#444" fill-opacity="0.8"/><rect x="754.27" y="496" width="1.2" height="1.8" fill="#6a6a6a" fill-opacity="0.85"/><rect x="757.91" y="495" width="1.8" height="1" fill="#444" fill-opacity="0.8"/><rect x="758.21" y="496" width="1.2" height="1.8" fill="#6a6a6a" fill-opacity="0.85"/><rect x="761.84" y="495" width="1.8" height="1" fill="#444" fill-opacity="0.8"/><rect x="762.14" y="496" width="1.2" height="1.8" fill="#6a6a6a" fill-opacity="0.85"/><rect x="765.77" y="495" width="1.8" height="1" fill="#444" fill-opacity="0.8"/><rect x="766.07" y="496" width="1.2" height="1.8" fill="#6a6a6a" fill-opacity="0.85"/><rect x="769.70" y="495" width="1.8" height="1" fill="#444" fill-opacity="0.8"/><rect x="770.00" y="496" width="1.2" height="1.8" fill="#6a6a6a" fill-opacity="0.85"/><rect x="773.64" y="495" width="1.8" height="1" fill="#444" fill-opacity="0.8"/><rect x="773.94" y="496" width="1.2" height="1.8" fill="#6a6a6a" fill-opacity="0.85"/><rect x="777.57" y="495" width="1.8" height="1" fill="#444" fill-opacity="0.8"/><rect x="777.87" y="496" width="1.2" height="1.8" fill="#6a6a6a" fill-opacity="0.85"/><rect x="781.50" y="495" width="1.8" height="1" fill="#444" fill-opacity="0.8"/><rect x="781.80" y="496" width="1.2" height="1.8" fill="#6a6a6a" fill-opacity="0.85"/><rect x="785.44" y="495" width="1.8" height="1" fill="#444" fill-opacity="0.8"/><rect x="785.74" y="496" width="1.2" height="1.8" fill="#6a6a6a" fill-opacity="0.85"/><rect x="789.37" y="495" width="1.8" height="1" fill="#444" fill-opacity="0.8"/><rect x="789.67" y="496" width="1.2" height="1.8" fill="#6a6a6a" fill-opacity="0.85"/><rect x="793.30" y="495" width="1.8" height="1" fill="#444" fill-opacity="0.8"/><rect x="793.60" y="496" width="1.2" height="1.8" fill="#6a6a6a" fill-opacity="0.85"/><rect x="797.24" y="495" width="1.8" height="1" fill="#444" fill-opacity="0.8"/><rect x="797.53" y="496" width="1.2" height="1.8" fill="#6a6a6a" fill-opacity="0.85"/><rect x="801.17" y="495" width="1.8" height="1" fill="#444" fill-opacity="0.8"/><rect x="801.47" y="496" width="1.2" height="1.8" fill="#6a6a6a" fill-opacity="0.85"/><rect x="805.10" y="495" width="1.8" height="1" fill="#444" fill-opacity="0.8"/><rect x="805.40" y="496" width="1.2" height="1.8" fill="#6a6a6a" fill-opacity="0.85"/><rect x="809.03" y="495" width="1.8" height="1" fill="#444" fill-opacity="0.8"/><rect x="809.33" y="496" width="1.2" height="1.8" fill="#6a6a6a" fill-opacity="0.85"/><rect x="812.97" y="495" width="1.8" height="1" fill="#444" fill-opacity="0.8"/><rect x="813.27" y="496" width="1.2" height="1.8" fill="#6a6a6a" fill-opacity="0.85"/><rect x="816.90" y="495" width="1.8" height="1" fill="#444" fill-opacity="0.8"/><rect x="817.20" y="496" width="1.2" height="1.8" fill="#6a6a6a" fill-opacity="0.85"/><rect x="820.83" y="495" width="1.8" height="1" fill="#444" fill-opacity="0.8"/><rect x="821.13" y="496" width="1.2" height="1.8" fill="#6a6a6a" fill-opacity="0.85"/><rect x="824.77" y="495" width="1.8" height="1" fill="#444" fill-opacity="0.8"/><rect x="825.07" y="496" width="1.2" height="1.8" fill="#6a6a6a" fill-opacity="0.85"/><rect x="828.70" y="495" width="1.8" height="1" fill="#444" fill-opacity="0.8"/><rect x="829.00" y="496" width="1.2" height="1.8" fill="#6a6a6a" fill-opacity="0.85"/><rect x="832.63" y="495" width="1.8" height="1" fill="#444" fill-opacity="0.8"/><rect x="832.93" y="496" width="1.2" height="1.8" fill="#6a6a6a" fill-opacity="0.85"/><rect x="836.56" y="495" width="1.8" height="1" fill="#444" fill-opacity="0.8"/><rect x="836.86" y="496" width="1.2" height="1.8" fill="#6a6a6a" fill-opacity="0.85"/><rect x="840.50" y="495" width="1.8" height="1" fill="#444" fill-opacity="0.8"/><rect x="840.80" y="496" width="1.2" height="1.8" fill="#6a6a6a" fill-opacity="0.85"/><rect x="844.43" y="495" width="1.8" height="1" fill="#444" fill-opacity="0.8"/><rect x="844.73" y="496" width="1.2" height="1.8" fill="#6a6a6a" fill-opacity="0.85"/><rect x="848.36" y="495" width="1.8" height="1" fill="#444" fill-opacity="0.8"/><rect x="848.66" y="496" width="1.2" height="1.8" fill="#6a6a6a" fill-opacity="0.85"/><rect x="852.30" y="495" width="1.8" height="1" fill="#444" fill-opacity="0.8"/><rect x="852.60" y="496" width="1.2" height="1.8" fill="#6a6a6a" fill-opacity="0.85"/><rect x="856.23" y="495" width="1.8" height="1" fill="#444" fill-opacity="0.8"/><rect x="856.53" y="496" width="1.2" height="1.8" fill="#6a6a6a" fill-opacity="0.85"/><rect x="860.16" y="495" width="1.8" height="1" fill="#444" fill-opacity="0.8"/><rect x="860.46" y="496" width="1.2" height="1.8" fill="#6a6a6a" fill-opacity="0.85"/><rect x="864.10" y="495" width="1.8" height="1" fill="#444" fill-opacity="0.8"/><rect x="864.40" y="496" width="1.2" height="1.8" fill="#6a6a6a" fill-opacity="0.85"/><rect x="868.03" y="495" width="1.8" height="1" fill="#444" fill-opacity="0.8"/><rect x="868.33" y="496" width="1.2" height="1.8" fill="#6a6a6a" fill-opacity="0.85"/><rect x="871.96" y="495" width="1.8" height="1" fill="#444" fill-opacity="0.8"/><rect x="872.26" y="496" width="1.2" height="1.8" fill="#6a6a6a" fill-opacity="0.85"/><rect x="875.89" y="495" width="1.8" height="1" fill="#444" fill-opacity="0.8"/><rect x="876.19" y="496" width="1.2" height="1.8" fill="#6a6a6a" fill-opacity="0.85"/><rect x="879.83" y="495" width="1.8" height="1" fill="#444" fill-opacity="0.8"/><rect x="880.13" y="496" width="1.2" height="1.8" fill="#6a6a6a" fill-opacity="0.85"/><rect x="883.76" y="495" width="1.8" height="1" fill="#444" fill-opacity="0.8"/><rect x="884.06" y="496" width="1.2" height="1.8" fill="#6a6a6a" fill-opacity="0.85"/><rect x="887.69" y="495" width="1.8" height="1" fill="#444" fill-opacity="0.8"/><rect x="887.99" y="496" width="1.2" height="1.8" fill="#6a6a6a" fill-opacity="0.85"/><rect x="891.63" y="495" width="1.8" height="1" fill="#444" fill-opacity="0.8"/><rect x="891.93" y="496" width="1.2" height="1.8" fill="#6a6a6a" fill-opacity="0.85"/><rect x="895.56" y="495" width="1.8" height="1" fill="#444" fill-opacity="0.8"/><rect x="895.86" y="496" width="1.2" height="1.8" fill="#6a6a6a" fill-opacity="0.85"/><rect x="899.49" y="495" width="1.8" height="1" fill="#444" fill-opacity="0.8"/><rect x="899.79" y="496" width="1.2" height="1.8" fill="#6a6a6a" fill-opacity="0.85"/><rect x="903.43" y="495" width="1.8" height="1" fill="#444" fill-opacity="0.8"/><rect x="903.73" y="496" width="1.2" height="1.8" fill="#6a6a6a" fill-opacity="0.85"/><rect x="907.36" y="495" width="1.8" height="1" fill="#444" fill-opacity="0.8"/><rect x="907.66" y="496" width="1.2" height="1.8" fill="#6a6a6a" fill-opacity="0.85"/><rect x="911.29" y="495" width="1.8" height="1" fill="#444" fill-opacity="0.8"/><rect x="911.59" y="496" width="1.2" height="1.8" fill="#6a6a6a" fill-opacity="0.85"/><rect x="915.23" y="495" width="1.8" height="1" fill="#444" fill-opacity="0.8"/><rect x="915.52" y="496" width="1.2" height="1.8" fill="#6a6a6a" fill-opacity="0.85"/><rect x="919.16" y="495" width="1.8" height="1" fill="#444" fill-opacity="0.8"/><rect x="919.46" y="496" width="1.2" height="1.8" fill="#6a6a6a" fill-opacity="0.85"/><rect x="923.09" y="495" width="1.8" height="1" fill="#444" fill-opacity="0.8"/><rect x="923.39" y="496" width="1.2" height="1.8" fill="#6a6a6a" fill-opacity="0.85"/><rect x="927.02" y="495" width="1.8" height="1" fill="#444" fill-opacity="0.8"/><rect x="927.32" y="496" width="1.2" height="1.8" fill="#6a6a6a" fill-opacity="0.85"/><rect x="930.96" y="495" width="1.8" height="1" fill="#444" fill-opacity="0.8"/><rect x="931.26" y="496" width="1.2" height="1.8" fill="#6a6a6a" fill-opacity="0.85"/><rect x="934.89" y="495" width="1.8" height="1" fill="#444" fill-opacity="0.8"/><rect x="935.19" y="496" width="1.2" height="1.8" fill="#6a6a6a" fill-opacity="0.85"/><rect x="938.82" y="495" width="1.8" height="1" fill="#444" fill-opacity="0.8"/><rect x="939.12" y="496" width="1.2" height="1.8" fill="#6a6a6a" fill-opacity="0.85"/><rect x="942.76" y="495" width="1.8" height="1" fill="#444" fill-opacity="0.8"/><rect x="943.06" y="496" width="1.2" height="1.8" fill="#6a6a6a" fill-opacity="0.85"/><rect x="946.69" y="495" width="1.8" height="1" fill="#444" fill-opacity="0.8"/><rect x="946.99" y="496" width="1.2" height="1.8" fill="#6a6a6a" fill-opacity="0.85"/><rect x="950.62" y="495" width="1.8" height="1" fill="#444" fill-opacity="0.8"/><rect x="950.92" y="496" width="1.2" height="1.8" fill="#6a6a6a" fill-opacity="0.85"/><rect x="954.55" y="495" width="1.8" height="1" fill="#444" fill-opacity="0.8"/><rect x="954.85" y="496" width="1.2" height="1.8" fill="#6a6a6a" fill-opacity="0.85"/><rect x="958.49" y="495" width="1.8" height="1" fill="#444" fill-opacity="0.8"/><rect x="958.79" y="496" width="1.2" height="1.8" fill="#6a6a6a" fill-opacity="0.85"/><rect x="962.42" y="495" width="1.8" height="1" fill="#444" fill-opacity="0.8"/><rect x="962.72" y="496" width="1.2" height="1.8" fill="#6a6a6a" fill-opacity="0.85"/><rect x="966.35" y="495" width="1.8" height="1" fill="#444" fill-opacity="0.8"/><rect x="966.65" y="496" width="1.2" height="1.8" fill="#6a6a6a" fill-opacity="0.85"/><rect x="970.29" y="495" width="1.8" height="1" fill="#444" fill-opacity="0.8"/><rect x="970.59" y="496" width="1.2" height="1.8" fill="#6a6a6a" fill-opacity="0.85"/><rect x="974.22" y="495" width="1.8" height="1" fill="#444" fill-opacity="0.8"/><rect x="974.52" y="496" width="1.2" height="1.8" fill="#6a6a6a" fill-opacity="0.85"/><rect x="978.15" y="495" width="1.8" height="1" fill="#444" fill-opacity="0.8"/><rect x="978.45" y="496" width="1.2" height="1.8" fill="#6a6a6a" fill-opacity="0.85"/><rect x="982.09" y="495" width="1.8" height="1" fill="#444" fill-opacity="0.8"/><rect x="982.39" y="496" width="1.2" height="1.8" fill="#6a6a6a" fill-opacity="0.85"/><rect x="986.02" y="495" width="1.8" height="1" fill="#444" fill-opacity="0.8"/><rect x="986.32" y="496" width="1.2" height="1.8" fill="#6a6a6a" fill-opacity="0.85"/><rect x="989.95" y="495" width="1.8" height="1" fill="#444" fill-opacity="0.8"/><rect x="990.25" y="496" width="1.2" height="1.8" fill="#6a6a6a" fill-opacity="0.85"/><rect x="993.88" y="495" width="1.8" height="1" fill="#444" fill-opacity="0.8"/><rect x="994.18" y="496" width="1.2" height="1.8" fill="#6a6a6a" fill-opacity="0.85"/><rect x="997.82" y="495" width="1.8" height="1" fill="#444" fill-opacity="0.8"/><rect x="998.12" y="496" width="1.2" height="1.8" fill="#6a6a6a" fill-opacity="0.85"/><rect x="1001.75" y="495" width="1.8" height="1" fill="#444" fill-opacity="0.8"/><rect x="1002.05" y="496" width="1.2" height="1.8" fill="#6a6a6a" fill-opacity="0.85"/><rect x="1005.68" y="495" width="1.8" height="1" fill="#444" fill-opacity="0.8"/><rect x="1005.98" y="496" width="1.2" height="1.8" fill="#6a6a6a" fill-opacity="0.85"/><rect x="1009.62" y="495" width="1.8" height="1" fill="#444" fill-opacity="0.8"/><rect x="1009.92" y="496" width="1.2" height="1.8" fill="#6a6a6a" fill-opacity="0.85"/><rect x="1013.55" y="495" width="1.8" height="1" fill="#444" fill-opacity="0.8"/><rect x="1013.85" y="496" width="1.2" height="1.8" fill="#6a6a6a" fill-opacity="0.85"/><rect x="1017.48" y="495" width="1.8" height="1" fill="#444" fill-opacity="0.8"/><rect x="1017.78" y="496" width="1.2" height="1.8" fill="#6a6a6a" fill-opacity="0.85"/><rect x="1021.42" y="495" width="1.8" height="1" fill="#444" fill-opacity="0.8"/><rect x="1021.72" y="496" width="1.2" height="1.8" fill="#6a6a6a" fill-opacity="0.85"/><rect x="1025.35" y="495" width="1.8" height="1" fill="#444" fill-opacity="0.8"/><rect x="1025.65" y="496" width="1.2" height="1.8" fill="#6a6a6a" fill-opacity="0.85"/><rect x="1029.28" y="495" width="1.8" height="1" fill="#444" fill-opacity="0.8"/><rect x="1029.58" y="496" width="1.2" height="1.8" fill="#6a6a6a" fill-opacity="0.85"/><rect x="1033.21" y="495" width="1.8" height="1" fill="#444" fill-opacity="0.8"/><rect x="1033.52" y="496" width="1.2" height="1.8" fill="#6a6a6a" fill-opacity="0.85"/><rect x="1037.15" y="495" width="1.8" height="1" fill="#444" fill-opacity="0.8"/><rect x="1037.45" y="496" width="1.2" height="1.8" fill="#6a6a6a" fill-opacity="0.85"/><rect x="1041.08" y="495" width="1.8" height="1" fill="#444" fill-opacity="0.8"/><rect x="1041.38" y="496" width="1.2" height="1.8" fill="#6a6a6a" fill-opacity="0.85"/><rect x="1045.01" y="495" width="1.8" height="1" fill="#444" fill-opacity="0.8"/><rect x="1045.31" y="496" width="1.2" height="1.8" fill="#6a6a6a" fill-opacity="0.85"/><rect x="1048.95" y="495" width="1.8" height="1" fill="#444" fill-opacity="0.8"/><rect x="1049.25" y="496" width="1.2" height="1.8" fill="#6a6a6a" fill-opacity="0.85"/><rect x="1052.88" y="495" width="1.8" height="1" fill="#444" fill-opacity="0.8"/><rect x="1053.18" y="496" width="1.2" height="1.8" fill="#6a6a6a" fill-opacity="0.85"/><rect x="1056.81" y="495" width="1.8" height="1" fill="#444" fill-opacity="0.8"/><rect x="1057.11" y="496" width="1.2" height="1.8" fill="#6a6a6a" fill-opacity="0.85"/><rect x="1060.75" y="495" width="1.8" height="1" fill="#444" fill-opacity="0.8"/><rect x="1061.05" y="496" width="1.2" height="1.8" fill="#6a6a6a" fill-opacity="0.85"/><rect x="1064.68" y="495" width="1.8" height="1" fill="#444" fill-opacity="0.8"/><rect x="1064.98" y="496" width="1.2" height="1.8" fill="#6a6a6a" fill-opacity="0.85"/><rect x="1068.61" y="495" width="1.8" height="1" fill="#444" fill-opacity="0.8"/><rect x="1068.91" y="496" width="1.2" height="1.8" fill="#6a6a6a" fill-opacity="0.85"/><rect x="1072.54" y="495" width="1.8" height="1" fill="#444" fill-opacity="0.8"/><rect x="1072.85" y="496" width="1.2" height="1.8" fill="#6a6a6a" fill-opacity="0.85"/><rect x="1076.48" y="495" width="1.8" height="1" fill="#444" fill-opacity="0.8"/><rect x="1076.78" y="496" width="1.2" height="1.8" fill="#6a6a6a" fill-opacity="0.85"/><rect x="1080.41" y="495" width="1.8" height="1" fill="#444" fill-opacity="0.8"/><rect x="1080.71" y="496" width="1.2" height="1.8" fill="#6a6a6a" fill-opacity="0.85"/><rect x="1084.34" y="495" width="1.8" height="1" fill="#444" fill-opacity="0.8"/><rect x="1084.64" y="496" width="1.2" height="1.8" fill="#6a6a6a" fill-opacity="0.85"/><rect x="1088.28" y="495" width="1.8" height="1" fill="#444" fill-opacity="0.8"/><rect x="1088.58" y="496" width="1.2" height="1.8" fill="#6a6a6a" fill-opacity="0.85"/><line x1="424.5" y1="178" x2="424.5" y2="494.5" stroke="#555" stroke-width="1"/><line x1="424.5" y1="494.5" x2="1093.3" y2="494.5" stroke="#3c3c3c" stroke-width="1"/><line x1="424.5" y1="495.5" x2="1093.3" y2="495.5" stroke="#3c3c3c" stroke-opacity="0.35" stroke-width="1"/><path d="M652.3,408.5 L658.6999999999999,414.9 L652.3,421.29999999999995 L645.9,414.9 Z" fill="#b04440"/><path d="M932,273.0 L938.4,279.4 L932,285.79999999999995 L925.6,279.4 Z" fill="#84a846"/><clipPath id="pclip"><rect x="0" y="0" width="1093" height="600"/></clipPath><g clip-path="url(#pclip)"><path d="M1089,200.2 L1095.3,206.5 L1089,212.8 L1082.7,206.5 Z" fill="#6e5299"/></g><circle cx="735.2" cy="342.6" r="5.2" fill="#c8d7ec" fill-opacity="0.55" stroke="#6f95c9" stroke-width="1"/></svg><span style="position:absolute;left:395.24px;top:490.00px;font-family:'Liberation Sans', sans-serif;font-size:7.4px;font-weight:400;color:#2b2b2b;white-space:nowrap;line-height:1;transform-origin:0 0;transform:scaleX(1.0000);-webkit-text-stroke:0.1px #2b2b2b;">€ 0,00</span><span style="position:absolute;left:376.75px;top:467.00px;font-family:'Liberation Sans', sans-serif;font-size:7.4px;font-weight:400;color:#2b2b2b;white-space:nowrap;line-height:1;transform-origin:0 0;transform:scaleX(1.0000);-webkit-text-stroke:0.1px #2b2b2b;">€ 10.000,00</span><span style="position:absolute;left:376.75px;top:443.00px;font-family:'Liberation Sans', sans-serif;font-size:7.4px;font-weight:400;color:#2b2b2b;white-space:nowrap;line-height:1;transform-origin:0 0;transform:scaleX(1.0000);-webkit-text-stroke:0.1px #2b2b2b;">€ 20.000,00</span><span style="position:absolute;left:376.75px;top:419.00px;font-family:'Liberation Sans', sans-serif;font-size:7.4px;font-weight:400;color:#2b2b2b;white-space:nowrap;line-height:1;transform-origin:0 0;transform:scaleX(1.0000);-webkit-text-stroke:0.1px #2b2b2b;">€ 30.000,00</span><span style="position:absolute;left:376.75px;top:395.00px;font-family:'Liberation Sans', sans-serif;font-size:7.4px;font-weight:400;color:#2b2b2b;white-space:nowrap;line-height:1;transform-origin:0 0;transform:scaleX(1.0000);-webkit-text-stroke:0.1px #2b2b2b;">€ 40.000,00</span><span style="position:absolute;left:376.75px;top:372.00px;font-family:'Liberation Sans', sans-serif;font-size:7.4px;font-weight:400;color:#2b2b2b;white-space:nowrap;line-height:1;transform-origin:0 0;transform:scaleX(1.0000);-webkit-text-stroke:0.1px #2b2b2b;">€ 50.000,00</span><span style="position:absolute;left:376.75px;top:348.00px;font-family:'Liberation Sans', sans-serif;font-size:7.4px;font-weight:400;color:#2b2b2b;white-space:nowrap;line-height:1;transform-origin:0 0;transform:scaleX(1.0000);-webkit-text-stroke:0.1px #2b2b2b;">€ 60.000,00</span><span style="position:absolute;left:376.75px;top:324.00px;font-family:'Liberation Sans', sans-serif;font-size:7.4px;font-weight:400;color:#2b2b2b;white-space:nowrap;line-height:1;transform-origin:0 0;transform:scaleX(1.0000);-webkit-text-stroke:0.1px #2b2b2b;">€ 70.000,00</span><span style="position:absolute;left:376.75px;top:300.00px;font-family:'Liberation Sans', sans-serif;font-size:7.4px;font-weight:400;color:#2b2b2b;white-space:nowrap;line-height:1;transform-origin:0 0;transform:scaleX(1.0000);-webkit-text-stroke:0.1px #2b2b2b;">€ 80.000,00</span><span style="position:absolute;left:376.75px;top:276.00px;font-family:'Liberation Sans', sans-serif;font-size:7.4px;font-weight:400;color:#2b2b2b;white-space:nowrap;line-height:1;transform-origin:0 0;transform:scaleX(1.0000);-webkit-text-stroke:0.1px #2b2b2b;">€ 90.000,00</span><span style="position:absolute;left:372.64px;top:252.00px;font-family:'Liberation Sans', sans-serif;font-size:7.4px;font-weight:400;color:#2b2b2b;white-space:nowrap;line-height:1;transform-origin:0 0;transform:scaleX(1.0000);-webkit-text-stroke:0.1px #2b2b2b;">€ 100.000,00</span><span style="position:absolute;left:373.19px;top:229.00px;font-family:'Liberation Sans', sans-serif;font-size:7.4px;font-weight:400;color:#2b2b2b;white-space:nowrap;line-height:1;transform-origin:0 0;transform:scaleX(1.0000);-webkit-text-stroke:0.1px #2b2b2b;">€ 110.000,00</span><span style="position:absolute;left:372.64px;top:205.00px;font-family:'Liberation Sans', sans-serif;font-size:7.4px;font-weight:400;color:#2b2b2b;white-space:nowrap;line-height:1;transform-origin:0 0;transform:scaleX(1.0000);-webkit-text-stroke:0.1px #2b2b2b;">€ 120.000,00</span><span style="position:absolute;left:372.64px;top:181.00px;font-family:'Liberation Sans', sans-serif;font-size:7.4px;font-weight:400;color:#2b2b2b;white-space:nowrap;line-height:1;transform-origin:0 0;transform:scaleX(1.0000);-webkit-text-stroke:0.1px #2b2b2b;">€ 130.000,00</span><span style="position:absolute;left:394.50px;top:516.65px;width:60px;height:8px;font-family:'Liberation Sans',sans-serif;font-size:7.6px;line-height:8px;text-align:center;color:#202020;-webkit-text-stroke:0.12px #202020;white-space:nowrap;transform:rotate(-90deg);transform-origin:50% 50%">09/07/2023</span><span style="position:absolute;left:406.30px;top:516.65px;width:60px;height:8px;font-family:'Liberation Sans',sans-serif;font-size:7.6px;line-height:8px;text-align:center;color:#202020;-webkit-text-stroke:0.12px #202020;white-space:nowrap;transform:rotate(-90deg);transform-origin:50% 50%">12/07/2023</span><span style="position:absolute;left:418.10px;top:516.65px;width:60px;height:8px;font-family:'Liberation Sans',sans-serif;font-size:7.6px;line-height:8px;text-align:center;color:#202020;-webkit-text-stroke:0.12px #202020;white-space:nowrap;transform:rotate(-90deg);transform-origin:50% 50%">15/07/2023</span><span style="position:absolute;left:429.90px;top:516.65px;width:60px;height:8px;font-family:'Liberation Sans',sans-serif;font-size:7.6px;line-height:8px;text-align:center;color:#202020;-webkit-text-stroke:0.12px #202020;white-space:nowrap;transform:rotate(-90deg);transform-origin:50% 50%">18/07/2023</span><span style="position:absolute;left:441.70px;top:516.65px;width:60px;height:8px;font-family:'Liberation Sans',sans-serif;font-size:7.6px;line-height:8px;text-align:center;color:#202020;-webkit-text-stroke:0.12px #202020;white-space:nowrap;transform:rotate(-90deg);transform-origin:50% 50%">21/07/2023</span><span style="position:absolute;left:453.50px;top:516.65px;width:60px;height:8px;font-family:'Liberation Sans',sans-serif;font-size:7.6px;line-height:8px;text-align:center;color:#202020;-webkit-text-stroke:0.12px #202020;white-space:nowrap;transform:rotate(-90deg);transform-origin:50% 50%">24/07/2023</span><span style="position:absolute;left:465.29px;top:516.65px;width:60px;height:8px;font-family:'Liberation Sans',sans-serif;font-size:7.6px;line-height:8px;text-align:center;color:#202020;-webkit-text-stroke:0.12px #202020;white-space:nowrap;transform:rotate(-90deg);transform-origin:50% 50%">27/07/2023</span><span style="position:absolute;left:477.09px;top:516.65px;width:60px;height:8px;font-family:'Liberation Sans',sans-serif;font-size:7.6px;line-height:8px;text-align:center;color:#202020;-webkit-text-stroke:0.12px #202020;white-space:nowrap;transform:rotate(-90deg);transform-origin:50% 50%">30/07/2023</span><span style="position:absolute;left:488.89px;top:516.65px;width:60px;height:8px;font-family:'Liberation Sans',sans-serif;font-size:7.6px;line-height:8px;text-align:center;color:#202020;-webkit-text-stroke:0.12px #202020;white-space:nowrap;transform:rotate(-90deg);transform-origin:50% 50%">02/08/2023</span><span style="position:absolute;left:500.69px;top:516.65px;width:60px;height:8px;font-family:'Liberation Sans',sans-serif;font-size:7.6px;line-height:8px;text-align:center;color:#202020;-webkit-text-stroke:0.12px #202020;white-space:nowrap;transform:rotate(-90deg);transform-origin:50% 50%">05/08/2023</span><span style="position:absolute;left:512.49px;top:516.65px;width:60px;height:8px;font-family:'Liberation Sans',sans-serif;font-size:7.6px;line-height:8px;text-align:center;color:#202020;-webkit-text-stroke:0.12px #202020;white-space:nowrap;transform:rotate(-90deg);transform-origin:50% 50%">08/08/2023</span><span style="position:absolute;left:524.29px;top:516.65px;width:60px;height:8px;font-family:'Liberation Sans',sans-serif;font-size:7.6px;line-height:8px;text-align:center;color:#202020;-webkit-text-stroke:0.12px #202020;white-space:nowrap;transform:rotate(-90deg);transform-origin:50% 50%">11/08/2023</span><span style="position:absolute;left:536.09px;top:516.65px;width:60px;height:8px;font-family:'Liberation Sans',sans-serif;font-size:7.6px;line-height:8px;text-align:center;color:#202020;-webkit-text-stroke:0.12px #202020;white-space:nowrap;transform:rotate(-90deg);transform-origin:50% 50%">14/08/2023</span><span style="position:absolute;left:547.89px;top:516.65px;width:60px;height:8px;font-family:'Liberation Sans',sans-serif;font-size:7.6px;line-height:8px;text-align:center;color:#202020;-webkit-text-stroke:0.12px #202020;white-space:nowrap;transform:rotate(-90deg);transform-origin:50% 50%">17/08/2023</span><span style="position:absolute;left:559.69px;top:516.65px;width:60px;height:8px;font-family:'Liberation Sans',sans-serif;font-size:7.6px;line-height:8px;text-align:center;color:#202020;-webkit-text-stroke:0.12px #202020;white-space:nowrap;transform:rotate(-90deg);transform-origin:50% 50%">20/08/2023</span><span style="position:absolute;left:571.49px;top:516.65px;width:60px;height:8px;font-family:'Liberation Sans',sans-serif;font-size:7.6px;line-height:8px;text-align:center;color:#202020;-webkit-text-stroke:0.12px #202020;white-space:nowrap;transform:rotate(-90deg);transform-origin:50% 50%">23/08/2023</span><span style="position:absolute;left:583.28px;top:516.65px;width:60px;height:8px;font-family:'Liberation Sans',sans-serif;font-size:7.6px;line-height:8px;text-align:center;color:#202020;-webkit-text-stroke:0.12px #202020;white-space:nowrap;transform:rotate(-90deg);transform-origin:50% 50%">26/08/2023</span><span style="position:absolute;left:595.08px;top:516.65px;width:60px;height:8px;font-family:'Liberation Sans',sans-serif;font-size:7.6px;line-height:8px;text-align:center;color:#202020;-webkit-text-stroke:0.12px #202020;white-space:nowrap;transform:rotate(-90deg);transform-origin:50% 50%">29/08/2023</span><span style="position:absolute;left:606.88px;top:516.65px;width:60px;height:8px;font-family:'Liberation Sans',sans-serif;font-size:7.6px;line-height:8px;text-align:center;color:#202020;-webkit-text-stroke:0.12px #202020;white-space:nowrap;transform:rotate(-90deg);transform-origin:50% 50%">01/09/2023</span><span style="position:absolute;left:618.68px;top:516.65px;width:60px;height:8px;font-family:'Liberation Sans',sans-serif;font-size:7.6px;line-height:8px;text-align:center;color:#202020;-webkit-text-stroke:0.12px #202020;white-space:nowrap;transform:rotate(-90deg);transform-origin:50% 50%">04/09/2023</span><span style="position:absolute;left:630.48px;top:516.65px;width:60px;height:8px;font-family:'Liberation Sans',sans-serif;font-size:7.6px;line-height:8px;text-align:center;color:#202020;-webkit-text-stroke:0.12px #202020;white-space:nowrap;transform:rotate(-90deg);transform-origin:50% 50%">07/09/2023</span><span style="position:absolute;left:642.28px;top:516.65px;width:60px;height:8px;font-family:'Liberation Sans',sans-serif;font-size:7.6px;line-height:8px;text-align:center;color:#202020;-webkit-text-stroke:0.12px #202020;white-space:nowrap;transform:rotate(-90deg);transform-origin:50% 50%">10/09/2023</span><span style="position:absolute;left:654.08px;top:516.65px;width:60px;height:8px;font-family:'Liberation Sans',sans-serif;font-size:7.6px;line-height:8px;text-align:center;color:#202020;-webkit-text-stroke:0.12px #202020;white-space:nowrap;transform:rotate(-90deg);transform-origin:50% 50%">13/09/2023</span><span style="position:absolute;left:665.88px;top:516.65px;width:60px;height:8px;font-family:'Liberation Sans',sans-serif;font-size:7.6px;line-height:8px;text-align:center;color:#202020;-webkit-text-stroke:0.12px #202020;white-space:nowrap;transform:rotate(-90deg);transform-origin:50% 50%">16/09/2023</span><span style="position:absolute;left:677.68px;top:516.65px;width:60px;height:8px;font-family:'Liberation Sans',sans-serif;font-size:7.6px;line-height:8px;text-align:center;color:#202020;-webkit-text-stroke:0.12px #202020;white-space:nowrap;transform:rotate(-90deg);transform-origin:50% 50%">19/09/2023</span><span style="position:absolute;left:689.47px;top:516.65px;width:60px;height:8px;font-family:'Liberation Sans',sans-serif;font-size:7.6px;line-height:8px;text-align:center;color:#202020;-webkit-text-stroke:0.12px #202020;white-space:nowrap;transform:rotate(-90deg);transform-origin:50% 50%">22/09/2023</span><span style="position:absolute;left:701.27px;top:516.65px;width:60px;height:8px;font-family:'Liberation Sans',sans-serif;font-size:7.6px;line-height:8px;text-align:center;color:#202020;-webkit-text-stroke:0.12px #202020;white-space:nowrap;transform:rotate(-90deg);transform-origin:50% 50%">25/09/2023</span><span style="position:absolute;left:713.07px;top:516.65px;width:60px;height:8px;font-family:'Liberation Sans',sans-serif;font-size:7.6px;line-height:8px;text-align:center;color:#202020;-webkit-text-stroke:0.12px #202020;white-space:nowrap;transform:rotate(-90deg);transform-origin:50% 50%">28/09/2023</span><span style="position:absolute;left:724.87px;top:516.65px;width:60px;height:8px;font-family:'Liberation Sans',sans-serif;font-size:7.6px;line-height:8px;text-align:center;color:#202020;-webkit-text-stroke:0.12px #202020;white-space:nowrap;transform:rotate(-90deg);transform-origin:50% 50%">01/10/2023</span><span style="position:absolute;left:736.67px;top:516.65px;width:60px;height:8px;font-family:'Liberation Sans',sans-serif;font-size:7.6px;line-height:8px;text-align:center;color:#202020;-webkit-text-stroke:0.12px #202020;white-space:nowrap;transform:rotate(-90deg);transform-origin:50% 50%">04/10/2023</span><span style="position:absolute;left:748.47px;top:516.65px;width:60px;height:8px;font-family:'Liberation Sans',sans-serif;font-size:7.6px;line-height:8px;text-align:center;color:#202020;-webkit-text-stroke:0.12px #202020;white-space:nowrap;transform:rotate(-90deg);transform-origin:50% 50%">07/10/2023</span><span style="position:absolute;left:760.27px;top:516.65px;width:60px;height:8px;font-family:'Liberation Sans',sans-serif;font-size:7.6px;line-height:8px;text-align:center;color:#202020;-webkit-text-stroke:0.12px #202020;white-space:nowrap;transform:rotate(-90deg);transform-origin:50% 50%">10/10/2023</span><span style="position:absolute;left:772.07px;top:516.65px;width:60px;height:8px;font-family:'Liberation Sans',sans-serif;font-size:7.6px;line-height:8px;text-align:center;color:#202020;-webkit-text-stroke:0.12px #202020;white-space:nowrap;transform:rotate(-90deg);transform-origin:50% 50%">13/10/2023</span><span style="position:absolute;left:783.87px;top:516.65px;width:60px;height:8px;font-family:'Liberation Sans',sans-serif;font-size:7.6px;line-height:8px;text-align:center;color:#202020;-webkit-text-stroke:0.12px #202020;white-space:nowrap;transform:rotate(-90deg);transform-origin:50% 50%">16/10/2023</span><span style="position:absolute;left:795.67px;top:516.65px;width:60px;height:8px;font-family:'Liberation Sans',sans-serif;font-size:7.6px;line-height:8px;text-align:center;color:#202020;-webkit-text-stroke:0.12px #202020;white-space:nowrap;transform:rotate(-90deg);transform-origin:50% 50%">19/10/2023</span><span style="position:absolute;left:807.46px;top:516.65px;width:60px;height:8px;font-family:'Liberation Sans',sans-serif;font-size:7.6px;line-height:8px;text-align:center;color:#202020;-webkit-text-stroke:0.12px #202020;white-space:nowrap;transform:rotate(-90deg);transform-origin:50% 50%">22/10/2023</span><span style="position:absolute;left:819.26px;top:516.65px;width:60px;height:8px;font-family:'Liberation Sans',sans-serif;font-size:7.6px;line-height:8px;text-align:center;color:#202020;-webkit-text-stroke:0.12px #202020;white-space:nowrap;transform:rotate(-90deg);transform-origin:50% 50%">25/10/2023</span><span style="position:absolute;left:831.06px;top:516.65px;width:60px;height:8px;font-family:'Liberation Sans',sans-serif;font-size:7.6px;line-height:8px;text-align:center;color:#202020;-webkit-text-stroke:0.12px #202020;white-space:nowrap;transform:rotate(-90deg);transform-origin:50% 50%">28/10/2023</span><span style="position:absolute;left:842.86px;top:516.65px;width:60px;height:8px;font-family:'Liberation Sans',sans-serif;font-size:7.6px;line-height:8px;text-align:center;color:#202020;-webkit-text-stroke:0.12px #202020;white-space:nowrap;transform:rotate(-90deg);transform-origin:50% 50%">31/10/2023</span><span style="position:absolute;left:854.66px;top:516.65px;width:60px;height:8px;font-family:'Liberation Sans',sans-serif;font-size:7.6px;line-height:8px;text-align:center;color:#202020;-webkit-text-stroke:0.12px #202020;white-space:nowrap;transform:rotate(-90deg);transform-origin:50% 50%">03/11/2023</span><span style="position:absolute;left:866.46px;top:516.65px;width:60px;height:8px;font-family:'Liberation Sans',sans-serif;font-size:7.6px;line-height:8px;text-align:center;color:#202020;-webkit-text-stroke:0.12px #202020;white-space:nowrap;transform:rotate(-90deg);transform-origin:50% 50%">06/11/2023</span><span style="position:absolute;left:878.26px;top:516.65px;width:60px;height:8px;font-family:'Liberation Sans',sans-serif;font-size:7.6px;line-height:8px;text-align:center;color:#202020;-webkit-text-stroke:0.12px #202020;white-space:nowrap;transform:rotate(-90deg);transform-origin:50% 50%">09/11/2023</span><span style="position:absolute;left:890.06px;top:516.65px;width:60px;height:8px;font-family:'Liberation Sans',sans-serif;font-size:7.6px;line-height:8px;text-align:center;color:#202020;-webkit-text-stroke:0.12px #202020;white-space:nowrap;transform:rotate(-90deg);transform-origin:50% 50%">12/11/2023</span><span style="position:absolute;left:901.86px;top:516.65px;width:60px;height:8px;font-family:'Liberation Sans',sans-serif;font-size:7.6px;line-height:8px;text-align:center;color:#202020;-webkit-text-stroke:0.12px #202020;white-space:nowrap;transform:rotate(-90deg);transform-origin:50% 50%">15/11/2023</span><span style="position:absolute;left:913.66px;top:516.65px;width:60px;height:8px;font-family:'Liberation Sans',sans-serif;font-size:7.6px;line-height:8px;text-align:center;color:#202020;-webkit-text-stroke:0.12px #202020;white-space:nowrap;transform:rotate(-90deg);transform-origin:50% 50%">18/11/2023</span><span style="position:absolute;left:925.45px;top:516.65px;width:60px;height:8px;font-family:'Liberation Sans',sans-serif;font-size:7.6px;line-height:8px;text-align:center;color:#202020;-webkit-text-stroke:0.12px #202020;white-space:nowrap;transform:rotate(-90deg);transform-origin:50% 50%">21/11/2023</span><span style="position:absolute;left:937.25px;top:516.65px;width:60px;height:8px;font-family:'Liberation Sans',sans-serif;font-size:7.6px;line-height:8px;text-align:center;color:#202020;-webkit-text-stroke:0.12px #202020;white-space:nowrap;transform:rotate(-90deg);transform-origin:50% 50%">24/11/2023</span><span style="position:absolute;left:949.05px;top:516.65px;width:60px;height:8px;font-family:'Liberation Sans',sans-serif;font-size:7.6px;line-height:8px;text-align:center;color:#202020;-webkit-text-stroke:0.12px #202020;white-space:nowrap;transform:rotate(-90deg);transform-origin:50% 50%">27/11/2023</span><span style="position:absolute;left:960.85px;top:516.65px;width:60px;height:8px;font-family:'Liberation Sans',sans-serif;font-size:7.6px;line-height:8px;text-align:center;color:#202020;-webkit-text-stroke:0.12px #202020;white-space:nowrap;transform:rotate(-90deg);transform-origin:50% 50%">30/11/2023</span><span style="position:absolute;left:972.65px;top:516.65px;width:60px;height:8px;font-family:'Liberation Sans',sans-serif;font-size:7.6px;line-height:8px;text-align:center;color:#202020;-webkit-text-stroke:0.12px #202020;white-space:nowrap;transform:rotate(-90deg);transform-origin:50% 50%">03/12/2023</span><span style="position:absolute;left:984.45px;top:516.65px;width:60px;height:8px;font-family:'Liberation Sans',sans-serif;font-size:7.6px;line-height:8px;text-align:center;color:#202020;-webkit-text-stroke:0.12px #202020;white-space:nowrap;transform:rotate(-90deg);transform-origin:50% 50%">06/12/2023</span><span style="position:absolute;left:996.25px;top:516.65px;width:60px;height:8px;font-family:'Liberation Sans',sans-serif;font-size:7.6px;line-height:8px;text-align:center;color:#202020;-webkit-text-stroke:0.12px #202020;white-space:nowrap;transform:rotate(-90deg);transform-origin:50% 50%">09/12/2023</span><span style="position:absolute;left:1008.05px;top:516.65px;width:60px;height:8px;font-family:'Liberation Sans',sans-serif;font-size:7.6px;line-height:8px;text-align:center;color:#202020;-webkit-text-stroke:0.12px #202020;white-space:nowrap;transform:rotate(-90deg);transform-origin:50% 50%">12/12/2023</span><span style="position:absolute;left:1019.85px;top:516.65px;width:60px;height:8px;font-family:'Liberation Sans',sans-serif;font-size:7.6px;line-height:8px;text-align:center;color:#202020;-webkit-text-stroke:0.12px #202020;white-space:nowrap;transform:rotate(-90deg);transform-origin:50% 50%">15/12/2023</span><span style="position:absolute;left:1031.65px;top:516.65px;width:60px;height:8px;font-family:'Liberation Sans',sans-serif;font-size:7.6px;line-height:8px;text-align:center;color:#202020;-webkit-text-stroke:0.12px #202020;white-space:nowrap;transform:rotate(-90deg);transform-origin:50% 50%">18/12/2023</span><span style="position:absolute;left:1043.44px;top:516.65px;width:60px;height:8px;font-family:'Liberation Sans',sans-serif;font-size:7.6px;line-height:8px;text-align:center;color:#202020;-webkit-text-stroke:0.12px #202020;white-space:nowrap;transform:rotate(-90deg);transform-origin:50% 50%">21/12/2023</span><span style="position:absolute;left:1055.24px;top:516.65px;width:60px;height:8px;font-family:'Liberation Sans',sans-serif;font-size:7.6px;line-height:8px;text-align:center;color:#202020;-webkit-text-stroke:0.12px #202020;white-space:nowrap;transform:rotate(-90deg);transform-origin:50% 50%">24/12/2023</span><span style="position:absolute;left:647.90px;top:111.00px;font-family:'Liberation Sans', sans-serif;font-size:11px;font-weight:400;color:#2b2b2b;white-space:nowrap;line-height:1;transform-origin:0 0;transform:scaleX(1.0088);-webkit-text-stroke:0.1px #2b2b2b;">Cronoprogramma lavori di progetto</span><div style="position:absolute;left:985px;top:131px;width:109px;height:40px;background:#f0f0f0;border:1px solid #d9d9d9;box-sizing:border-box;"></div><svg width="1200" height="600" style="left:0;top:0"><path d="M994.5,133.5 L1000.1,139.1 L994.5,144.7 L988.9,139.1 Z" fill="#b04440"/><path d="M994.5,145.70000000000002 L1000.1,151.3 L994.5,156.9 L988.9,151.3 Z" fill="#84a846"/><path d="M994.5,157.9 L1000.1,163.5 L994.5,169.1 L988.9,163.5 Z" fill="#6e5299"/></svg><span style="position:absolute;left:1004.00px;top:136.00px;font-family:'Liberation Sans', sans-serif;font-size:7.3px;font-weight:400;color:#2b2b2b;white-space:nowrap;line-height:1;transform-origin:0 0;transform:scaleX(1.0038);-webkit-text-stroke:0.1px #2b2b2b;">S.A.L. n° 1 : € 33.000,00</span><span style="position:absolute;left:1004.00px;top:148.00px;font-family:'Liberation Sans', sans-serif;font-size:7.3px;font-weight:400;color:#2b2b2b;white-space:nowrap;line-height:1;transform-origin:0 0;transform:scaleX(1.0038);-webkit-text-stroke:0.1px #2b2b2b;">S.A.L. n° 2 : € 90.000,00</span><span style="position:absolute;left:1004.00px;top:160.00px;font-family:'Liberation Sans', sans-serif;font-size:7.3px;font-weight:400;color:#2b2b2b;white-space:nowrap;line-height:1;transform-origin:0 0;transform:scaleX(1.0005);-webkit-text-stroke:0.1px #2b2b2b;">S.A.L. n° 3 : € 120.414,31</span><div style="position:absolute;left:744.5px;top:312px;width:105px;height:26.3px;background:#fff;border:1px solid #8a8a8a;border-radius:3px;box-sizing:border-box;box-shadow:0 0 1px rgba(0,0,0,.2);"></div><svg width="1200" height="600" style="left:0;top:0"><path d="M757.5,320.4 L763,330.6 L752,330.6 Z" fill="#a9c0e0"/><path d="M740.3,344.6 L740.3,358.6 L743.6,355.4 L746.3,360.8 L748.5,359.8 L746,354.5 L750.4,354.5 Z" fill="#fff" stroke="#222" stroke-width="0.9" stroke-linejoin="round"/></svg><span style="position:absolute;left:765.00px;top:322.00px;font-family:'Liberation Sans', sans-serif;font-size:7.6px;font-weight:400;color:#2b2b2b;white-space:nowrap;line-height:1;transform-origin:0 0;transform:scaleX(0.9994);-webkit-text-stroke:0.1px #2b2b2b;">Progetto: € 63.464,65</span><span style="position:absolute;left:118.70px;top:85.00px;font-family:'Liberation Sans', sans-serif;font-size:8.2px;font-weight:400;color:#1a1a1a;white-space:nowrap;line-height:1;transform-origin:0 0;transform:scaleX(0.9078);-webkit-text-stroke:0.1px #1a1a1a;">Cantiere</span><span style="position:absolute;left:118.70px;top:99.00px;font-family:'Liberation Sans', sans-serif;font-size:8.2px;font-weight:400;color:#1a1a1a;white-space:nowrap;line-height:1;transform-origin:0 0;transform:scaleX(0.8775);-webkit-text-stroke:0.1px #1a1a1a;">Figure e responsabili</span><span style="position:absolute;left:118.70px;top:113.00px;font-family:'Liberation Sans', sans-serif;font-size:8.2px;font-weight:400;color:#1a1a1a;white-space:nowrap;line-height:1;transform-origin:0 0;transform:scaleX(0.8941);-webkit-text-stroke:0.1px #1a1a1a;">Impostazioni</span><span style="position:absolute;left:118.70px;top:126.00px;font-family:'Liberation Sans', sans-serif;font-size:8.2px;font-weight:400;color:#1a1a1a;white-space:nowrap;line-height:1;transform-origin:0 0;transform:scaleX(0.8628);-webkit-text-stroke:0.1px #1a1a1a;">Cronoprogramma - PFTE</span><span style="position:absolute;left:134.40px;top:140.00px;font-family:'Liberation Sans', sans-serif;font-size:8.2px;font-weight:400;color:#1a1a1a;white-space:nowrap;line-height:1;transform-origin:0 0;transform:scaleX(0.8851);-webkit-text-stroke:0.1px #1a1a1a;">PFTE&nbsp; del 02/07/2023</span><span style="position:absolute;left:134.40px;top:154.00px;font-family:'Liberation Sans', sans-serif;font-size:8.2px;font-weight:400;color:#1a1a1a;white-space:nowrap;line-height:1;transform-origin:0 0;transform:scaleX(0.8715);-webkit-text-stroke:0.1px #1a1a1a;">PFTE&nbsp; del 07/07/2023 - CON COSTI</span><span style="position:absolute;left:150.00px;top:167.00px;font-family:'Liberation Sans', sans-serif;font-size:8.2px;font-weight:400;color:#1a1a1a;white-space:nowrap;line-height:1;transform-origin:0 0;transform:scaleX(0.8834);-webkit-text-stroke:0.1px #1a1a1a;">Grafico Cronoprogramma</span><span style="position:absolute;left:150.00px;top:181.00px;font-family:'Liberation Sans', sans-serif;font-size:8.2px;font-weight:400;color:#1a1a1a;white-space:nowrap;line-height:1;transform-origin:0 0;transform:scaleX(0.8718);-webkit-text-stroke:0.1px #1a1a1a;">Stampe</span><span style="position:absolute;left:165.30px;top:194.00px;font-family:'Liberation Sans', sans-serif;font-size:8.2px;font-weight:400;color:#1a1a1a;white-space:nowrap;line-height:1;transform-origin:0 0;transform:scaleX(0.8715);-webkit-text-stroke:0.1px #1a1a1a;">PFTE&nbsp; del 07/07/2023 - CON COSTI</span><span style="position:absolute;left:118.70px;top:208.00px;font-family:'Liberation Sans', sans-serif;font-size:8.2px;font-weight:400;color:#1a1a1a;white-space:nowrap;line-height:1;transform-origin:0 0;transform:scaleX(0.8997);-webkit-text-stroke:0.1px #1a1a1a;">Cronoprogramma - Progetto esecutivo</span><span style="position:absolute;left:134.40px;top:222.00px;font-family:'Liberation Sans', sans-serif;font-size:8.2px;font-weight:400;color:#1a1a1a;white-space:nowrap;line-height:1;transform-origin:0 0;transform:scaleX(0.9001);-webkit-text-stroke:0.1px #1a1a1a;">CP esecutivo del 07/07/2023</span><span style="position:absolute;left:134.40px;top:235.00px;font-family:'Liberation Sans', sans-serif;font-size:8.2px;font-weight:400;color:#1a1a1a;white-space:nowrap;line-height:1;transform-origin:0 0;transform:scaleX(0.9001);-webkit-text-stroke:0.1px #1a1a1a;">CP esecutivo del 08/07/2023</span><div style="position:absolute;left:148.6px;top:246px;width:84.6px;height:13px;background:#ededed;"></div><span style="position:absolute;left:150.00px;top:249.00px;font-family:'Liberation Sans', sans-serif;font-size:8.2px;font-weight:400;color:#1a1a1a;white-space:nowrap;line-height:1;transform-origin:0 0;transform:scaleX(0.8823);-webkit-text-stroke:0.1px #1a1a1a;">Grafico Cronoprogramma</span><span style="position:absolute;left:150.00px;top:263.00px;font-family:'Liberation Sans', sans-serif;font-size:8.2px;font-weight:400;color:#1a1a1a;white-space:nowrap;line-height:1;transform-origin:0 0;transform:scaleX(0.8718);-webkit-text-stroke:0.1px #1a1a1a;">Stampe</span><span style="position:absolute;left:118.70px;top:276.00px;font-family:'Liberation Sans', sans-serif;font-size:8.2px;font-weight:400;color:#1a1a1a;white-space:nowrap;line-height:1;transform-origin:0 0;transform:scaleX(0.8781);-webkit-text-stroke:0.1px #1a1a1a;">Programma di esecuzione lavori</span><span style="position:absolute;left:134.40px;top:290.00px;font-family:'Liberation Sans', sans-serif;font-size:8.2px;font-weight:400;color:#1a1a1a;white-space:nowrap;line-height:1;transform-origin:0 0;transform:scaleX(0.8860);-webkit-text-stroke:0.1px #1a1a1a;">Programma di esecuzione del 10/07/2023</span><span style="position:absolute;left:118.70px;top:303.00px;font-family:'Liberation Sans', sans-serif;font-size:8.2px;font-weight:400;color:#1a1a1a;white-space:nowrap;line-height:1;transform-origin:0 0;transform:scaleX(0.9015);-webkit-text-stroke:0.1px #1a1a1a;">Controllo avanzamento lavori</span><span style="position:absolute;left:134.40px;top:317.00px;font-family:'Liberation Sans', sans-serif;font-size:8.2px;font-weight:400;color:#1a1a1a;white-space:nowrap;line-height:1;transform-origin:0 0;transform:scaleX(0.9003);-webkit-text-stroke:0.1px #1a1a1a;">CP avanzamento lavori del 30/08/2023</span><span style="position:absolute;left:134.40px;top:331.00px;font-family:'Liberation Sans', sans-serif;font-size:8.2px;font-weight:400;color:#1a1a1a;white-space:nowrap;line-height:1;transform-origin:0 0;transform:scaleX(0.9003);-webkit-text-stroke:0.1px #1a1a1a;">CP avanzamento lavori del 09/07/2023</span><span style="position:absolute;left:118.70px;top:344.00px;font-family:'Liberation Sans', sans-serif;font-size:8.2px;font-weight:400;color:#1a1a1a;white-space:nowrap;line-height:1;transform-origin:0 0;transform:scaleX(0.9355);-webkit-text-stroke:0.1px #1a1a1a;">Quadri di raffronto</span><span style="position:absolute;left:134.40px;top:358.00px;font-family:'Liberation Sans', sans-serif;font-size:8.2px;font-weight:400;color:#1a1a1a;white-space:nowrap;line-height:1;transform-origin:0 0;transform:scaleX(0.9084);-webkit-text-stroke:0.1px #1a1a1a;">Confronto del 30/08/2023 SAL 1</span><svg width="1200" height="600" style="left:0;top:0"><rect x="92.7" y="113.35" width="5.5" height="5.5" fill="#f8f8f8" stroke="#a8a8a8" stroke-width="0.9"/><path d="M93.7,116.10 h3.5" stroke="#4a6494" stroke-width="1"/><path d="M95.45,114.35 v3.5" stroke="#4a6494" stroke-width="1"/><rect x="92.7" y="126.98" width="5.5" height="5.5" fill="#f8f8f8" stroke="#a8a8a8" stroke-width="0.9"/><path d="M93.7,129.73 h3.5" stroke="#4a6494" stroke-width="1"/><rect x="108.3" y="140.60" width="5.5" height="5.5" fill="#f8f8f8" stroke="#a8a8a8" stroke-width="0.9"/><path d="M109.3,143.35 h3.5" stroke="#4a6494" stroke-width="1"/><path d="M111.05,141.60 v3.5" stroke="#4a6494" stroke-width="1"/><rect x="108.3" y="154.22" width="5.5" height="5.5" fill="#f8f8f8" stroke="#a8a8a8" stroke-width="0.9"/><path d="M109.3,156.97 h3.5" stroke="#4a6494" stroke-width="1"/><rect x="123.9" y="181.47" width="5.5" height="5.5" fill="#f8f8f8" stroke="#a8a8a8" stroke-width="0.9"/><path d="M124.9,184.22 h3.5" stroke="#4a6494" stroke-width="1"/><rect x="92.7" y="208.72" width="5.5" height="5.5" fill="#f8f8f8" stroke="#a8a8a8" stroke-width="0.9"/><path d="M93.7,211.47 h3.5" stroke="#4a6494" stroke-width="1"/><rect x="108.3" y="222.35" width="5.5" height="5.5" fill="#f8f8f8" stroke="#a8a8a8" stroke-width="0.9"/><path d="M109.3,225.10 h3.5" stroke="#4a6494" stroke-width="1"/><path d="M111.05,223.35 v3.5" stroke="#4a6494" stroke-width="1"/><rect x="108.3" y="235.97" width="5.5" height="5.5" fill="#f8f8f8" stroke="#a8a8a8" stroke-width="0.9"/><path d="M109.3,238.72 h3.5" stroke="#4a6494" stroke-width="1"/><rect x="92.7" y="276.85" width="5.5" height="5.5" fill="#f8f8f8" stroke="#a8a8a8" stroke-width="0.9"/><path d="M93.7,279.60 h3.5" stroke="#4a6494" stroke-width="1"/><rect x="108.3" y="290.47" width="5.5" height="5.5" fill="#f8f8f8" stroke="#a8a8a8" stroke-width="0.9"/><path d="M109.3,293.22 h3.5" stroke="#4a6494" stroke-width="1"/><path d="M111.05,291.47 v3.5" stroke="#4a6494" stroke-width="1"/><rect x="92.7" y="304.10" width="5.5" height="5.5" fill="#f8f8f8" stroke="#a8a8a8" stroke-width="0.9"/><path d="M93.7,306.85 h3.5" stroke="#4a6494" stroke-width="1"/><rect x="108.3" y="317.72" width="5.5" height="5.5" fill="#f8f8f8" stroke="#a8a8a8" stroke-width="0.9"/><path d="M109.3,320.47 h3.5" stroke="#4a6494" stroke-width="1"/><path d="M111.05,318.72 v3.5" stroke="#4a6494" stroke-width="1"/><rect x="108.3" y="331.35" width="5.5" height="5.5" fill="#f8f8f8" stroke="#a8a8a8" stroke-width="0.9"/><path d="M109.3,334.10 h3.5" stroke="#4a6494" stroke-width="1"/><path d="M111.05,332.35 v3.5" stroke="#4a6494" stroke-width="1"/><rect x="92.7" y="344.97" width="5.5" height="5.5" fill="#f8f8f8" stroke="#a8a8a8" stroke-width="0.9"/><path d="M93.7,347.72 h3.5" stroke="#4a6494" stroke-width="1"/><rect x="108.3" y="358.60" width="5.5" height="5.5" fill="#f8f8f8" stroke="#a8a8a8" stroke-width="0.9"/><path d="M109.3,361.35 h3.5" stroke="#4a6494" stroke-width="1"/><path d="M111.05,359.60 v3.5" stroke="#4a6494" stroke-width="1"/></svg><svg width="1200" height="600" style="left:0;top:0;z-index:5"><defs><linearGradient id="flop" x1="0" y1="0" x2="1" y2="0"><stop offset="0" stop-color="#8c8cec"/><stop offset="0.5" stop-color="#4f50c8"/><stop offset="1" stop-color="#30309a"/></linearGradient></defs><rect x="86.8" y="5" width="12" height="12" fill="#e4eef9"/><path d="M87.8,5.5 v11 M92.3,5.5 v11 M97,5.5 v11" stroke="#3b8ad6" stroke-width="1.4"/><path d="M88,11 h4 M92.3,9.3 h3.5 M92.3,13.4 h3.5 M95,7.3 h3 M95,15.4 h3" stroke="#1f6ab8" stroke-width="1.1"/><rect x="1058.5" y="11.5" width="7" height="3" rx="1" fill="#eef2f8" stroke="#7b8797" stroke-width="1"/><rect x="1080.5" y="8.5" width="7" height="6" rx="1" fill="#eef2f8" stroke="#7b8797" stroke-width="1"/><rect x="1082" y="10.5" width="3" height="2" fill="#333"/><path d="M1102,9 l6,6 M1108,9 l-6,6" stroke="#7b8797" stroke-width="2.4"/><path d="M1102,9 l6,6 M1108,9 l-6,6" stroke="#f0f3f8" stroke-width="1"/><circle cx="952" cy="28.2" r="4" fill="#3a82c8"/><circle cx="952" cy="26" r="1.4" fill="#8cbce8"/><circle cx="950.4" cy="28.6" r="1" fill="#fff"/><circle cx="953.6" cy="28.6" r="1" fill="#fff"/><circle cx="952" cy="31.4" r="0.9" fill="#e8f4ff"/><circle cx="97.1" cy="47.9" r="5.3" fill="#f4f7fb" stroke="#4a4a4a" stroke-width="1"/><path d="M95.8,45.6 l2.3,2.3 l-2.3,2.3" stroke="#333" stroke-width="1.3" fill="none"/><path d="M143.2,42.5 h5.5 l3,3 v8 h-8.5 Z" fill="#fbfbfb" stroke="#c8c8c8" stroke-width="0.8"/><path d="M148.7,42.5 v3 h3" fill="#eee" stroke="#c8c8c8" stroke-width="0.6"/><path d="M187.2,44.5 h3.5 l1,1 h4 v2 h-8.5 Z" fill="#e9b860" stroke="#c08a34" stroke-width="0.6"/><path d="M187.2,51.5 L188.7,47.0 H197.7 L196.2,51.5 Z" fill="#f5cf82" stroke="#c08a34" stroke-width="0.6"/><rect x="205.3" y="43.099999999999994" width="9.6" height="9.6" rx="0.8" fill="url(#flop)"/><rect x="207.2" y="43.599999999999994" width="5.6" height="4" fill="#f4f4ff"/><rect x="207.8" y="49.4" width="4.4" height="3" fill="#1c1c3a"/><rect x="210.2" y="50.0" width="1.2" height="2" fill="#d8d8f0"/><rect x="222.8" y="43.099999999999994" width="9.6" height="9.6" rx="0.8" fill="url(#flop)"/><rect x="224.7" y="43.599999999999994" width="5.6" height="4" fill="#f4f4ff"/><rect x="225.3" y="49.4" width="4.4" height="3" fill="#1c1c3a"/><rect x="227.7" y="50.0" width="1.2" height="2" fill="#d8d8f0"/><path d="M242.86,44.31 A3.9,3.9 0 1 0 248.09,44.99" fill="none" stroke="#1f9a1f" stroke-width="2.5"/><path d="M245.70,41.90 L250.30,42.10 L249.70,46.60 Z" fill="#5cc83c"/><rect x="256" y="39.5" width="1" height="17" fill="#c3d0e2"/><rect x="257" y="39.5" width="1" height="17" fill="#fafcff"/><rect x="263.5" y="43.5" width="10" height="9" fill="#f4f4f4" stroke="#b8b8b8" stroke-width="0.8"/><rect x="265" y="46.5" width="3.5" height="6" fill="#2c7be0"/><rect x="268" y="49" width="4" height="3.5" fill="#2c7be0"/><path d="M265,46.5 l1.7,-2 l1.8,2 Z" fill="#e03a3a"/><circle cx="285.3" cy="48.599999999999994" r="1.5" fill="#e8eef5" stroke="#9aa8b8" stroke-width="0.6"/><path d="M283.3,54.3 q0,-4 2,-4 q2,0 2,4 Z" fill="#eef2f6" stroke="#a8b4c0" stroke-width="0.6"/><rect x="284.3" y="43.199999999999996" width="10.6" height="1.9" rx="0.6" fill="#e5621e"/><rect x="284.3" y="43.8" width="1.5" height="2.2" fill="#e5621e"/><rect x="287.7" y="42.5" width="1.8" height="11.3" fill="#e5621e"/><circle cx="288.6" cy="53.5" r="1.4" fill="#e5621e"/><rect x="293.2" y="44.8" width="0.9" height="4.5" fill="#ee9a6a"/><rect x="292.8" y="48.9" width="1.8" height="2.2" fill="#6a6a6a"/><rect x="302" y="39.5" width="1" height="17" fill="#c3d0e2"/><rect x="303" y="39.5" width="1" height="17" fill="#fafcff"/><path d="M307.7,43.3 L316.7,52.3 M316.7,43.3 L307.7,52.3" stroke="#3a3a3a" stroke-width="1.8"/><circle cx="308.5" cy="51.5" r="1.5" fill="#3a3a3a"/><circle cx="315.9" cy="44.099999999999994" r="1.7" fill="none" stroke="#3a3a3a" stroke-width="1"/><rect x="325.5" y="47.0" width="3" height="6" fill="#e8505a"/><rect x="329" y="43.0" width="3" height="10" fill="#3a6ad8"/><rect x="332.5" y="48.0" width="3" height="5" fill="#5ab04a"/><rect x="343.5" y="44.0" width="11" height="8" fill="#fff" stroke="#8aa6cc" stroke-width="0.9"/><rect x="343.5" y="44.0" width="11" height="2" fill="#8aa6cc"/><path d="M347,46.0 v6 M351,46.0 v6 M343.5,49.0 h11" stroke="#b8c8e0" stroke-width="0.6"/><rect x="361.3" y="43.0" width="11" height="10" fill="#f6f6f6" stroke="#4a6a9a" stroke-width="0.9"/><rect x="362.3" y="44.5" width="4" height="4" fill="#58a058"/><rect x="367.3" y="44.5" width="4" height="4" fill="#e05050"/><rect x="362.3" y="49.0" width="4" height="3" fill="#4a70c0"/><rect x="378" y="39.5" width="1" height="17" fill="#c3d0e2"/><rect x="379" y="39.5" width="1" height="17" fill="#fafcff"/><rect x="384.2" y="44.0" width="10" height="8" fill="#fff" stroke="#3a78cc" stroke-width="1"/><path d="M385.7,45.5 L392.2,50.5 H385.7 Z" fill="#dca86a"/><polygon points="391.70,42.00 392.49,43.91 394.55,44.07 392.98,45.42 393.46,47.43 391.70,46.35 389.94,47.43 390.42,45.42 388.85,44.07 390.91,43.91" fill="#f5e626" stroke="#6a9a20" stroke-width="0.5"/><rect x="402.2" y="43.5" width="10" height="8" fill="#dedede" stroke="#aaaaaa" stroke-width="0.9"/><rect x="402.7" y="44" width="9" height="1.8" fill="#c4c4c4"/><circle cx="410.7" cy="51" r="2" fill="#c6c6c6" stroke="#999" stroke-width="0.6"/><path d="M420,52.5 V50 h2 V48 h2 V46 h2 V44 h2 v8.5 Z" fill="#c8c8c8" stroke="#b0b0b0" stroke-width="0.5"/><rect x="428" y="42.5" width="1.4" height="10" fill="#eee" stroke="#bbb" stroke-width="0.4"/><rect x="436.5" y="42.5" width="9" height="7" fill="#e2e2e2" stroke="#aaa" stroke-width="0.8"/><rect x="438.5" y="45" width="9" height="7.5" fill="#d8d8d8" stroke="#a0a0a0" stroke-width="0.8"/><rect x="455.5" y="43.5" width="10" height="8" fill="#dedede" stroke="#aaaaaa" stroke-width="0.9"/><rect x="456" y="44" width="9" height="1.8" fill="#c4c4c4"/><circle cx="464" cy="51" r="2" fill="#c6c6c6" stroke="#999" stroke-width="0.6"/><rect x="470" y="39.5" width="1" height="17" fill="#c3d0e2"/><rect x="471" y="39.5" width="1" height="17" fill="#fafcff"/><rect x="477.5" y="44.0" width="10" height="8" fill="#fff" stroke="#3a78cc" stroke-width="1"/><path d="M479,45.5 L485.5,50.5 H479 Z" fill="#dca86a"/><polygon points="485.00,42.00 485.79,43.91 487.85,44.07 486.28,45.42 486.76,47.43 485.00,46.35 483.24,47.43 483.72,45.42 482.15,44.07 484.21,43.91" fill="#f5e626" stroke="#6a9a20" stroke-width="0.5"/><rect x="495.5" y="43.5" width="10" height="8" fill="#dedede" stroke="#aaaaaa" stroke-width="0.9"/><rect x="496" y="44" width="9" height="1.8" fill="#c4c4c4"/><circle cx="504" cy="51" r="2" fill="#c6c6c6" stroke="#999" stroke-width="0.6"/><path d="M513,52.5 V50 h2 V48 h2 V46 h2 V44 h2 v8.5 Z" fill="#c8c8c8" stroke="#b0b0b0" stroke-width="0.5"/><rect x="521" y="42.5" width="1.4" height="10" fill="#eee" stroke="#bbb" stroke-width="0.4"/><rect x="530.5" y="43.5" width="10" height="8" fill="#dedede" stroke="#aaaaaa" stroke-width="0.9"/><rect x="531" y="44" width="9" height="1.8" fill="#c4c4c4"/><circle cx="539" cy="51" r="2" fill="#c6c6c6" stroke="#999" stroke-width="0.6"/><rect x="546" y="39.5" width="1" height="17" fill="#c3d0e2"/><rect x="547" y="39.5" width="1" height="17" fill="#fafcff"/><rect x="552.8" y="43.199999999999996" width="10.6" height="1.9" rx="0.6" fill="#e5621e"/><rect x="552.8" y="43.8" width="1.5" height="2.2" fill="#e5621e"/><rect x="556.2" y="42.5" width="1.8" height="11.3" fill="#e5621e"/><circle cx="557.1" cy="53.5" r="1.4" fill="#e5621e"/><polygon points="560.30,47.40 561.15,49.44 563.34,49.61 561.67,51.04 562.18,53.19 560.30,52.04 558.42,53.19 558.93,51.04 557.26,49.61 559.45,49.44" fill="#f5e626" stroke="#6a9a20" stroke-width="0.5"/><rect x="570.8" y="43.199999999999996" width="10.6" height="1.9" rx="0.6" fill="#b4b4b4"/><rect x="570.8" y="43.8" width="1.5" height="2.2" fill="#b4b4b4"/><rect x="574.2" y="42.5" width="1.8" height="11.3" fill="#b4b4b4"/><circle cx="575.1" cy="53.5" r="1.4" fill="#b4b4b4"/><circle cx="579.3" cy="51.9" r="1.9" fill="#cfcfcf" stroke="#9a9a9a" stroke-width="0.8"/><path d="M588.5,52.5 V50 h2 V48 h2 V46 h2 V44 h2 v8.5 Z" fill="#c8c8c8" stroke="#b0b0b0" stroke-width="0.5"/><rect x="596.5" y="42.5" width="1.4" height="10" fill="#eee" stroke="#bbb" stroke-width="0.4"/><rect x="605.8" y="43.199999999999996" width="10.6" height="1.9" rx="0.6" fill="#b4b4b4"/><rect x="605.8" y="43.8" width="1.5" height="2.2" fill="#b4b4b4"/><rect x="609.2" y="42.5" width="1.8" height="11.3" fill="#b4b4b4"/><circle cx="610.1" cy="53.5" r="1.4" fill="#b4b4b4"/><circle cx="614.3" cy="51.9" r="1.9" fill="#cfcfcf" stroke="#9a9a9a" stroke-width="0.8"/><rect x="624.0999999999999" y="43.199999999999996" width="10.6" height="1.9" rx="0.6" fill="#b4b4b4"/><rect x="624.0999999999999" y="43.8" width="1.5" height="2.2" fill="#b4b4b4"/><rect x="627.5" y="42.5" width="1.8" height="11.3" fill="#b4b4b4"/><circle cx="628.4" cy="53.5" r="1.4" fill="#b4b4b4"/><circle cx="632.5999999999999" cy="51.9" r="1.9" fill="#cfcfcf" stroke="#9a9a9a" stroke-width="0.8"/><rect x="639.5" y="39.5" width="1" height="17" fill="#c3d0e2"/><rect x="640.5" y="39.5" width="1" height="17" fill="#fafcff"/><rect x="646.3" y="44.0" width="10" height="8" fill="#fff" stroke="#3a78cc" stroke-width="1"/><path d="M647.8,50.5 l3,-3 l1.5,1 l3,-3" stroke="#5a8ad0" stroke-width="0.8" fill="none"/><polygon points="653.80,42.00 654.59,43.91 656.65,44.07 655.08,45.42 655.56,47.43 653.80,46.35 652.04,47.43 652.52,45.42 650.95,44.07 653.01,43.91" fill="#f5e626" stroke="#6a9a20" stroke-width="0.5"/><rect x="663.8" y="44.0" width="10" height="8" fill="#fff" stroke="#3a78cc" stroke-width="1"/><path d="M665.3,50.5 l3,-3 l1.5,1 l3,-3" stroke="#5a8ad0" stroke-width="0.8" fill="none"/><circle cx="672.8" cy="51.0" r="2.1" fill="#19c019" stroke="#0e8a0e" stroke-width="0.3"/><path d="M682,52.5 V50 h2 V48 h2 V46 h2 V44 h2 v8.5 Z" fill="#c8c8c8" stroke="#b0b0b0" stroke-width="0.5"/><rect x="690" y="42.5" width="1.4" height="10" fill="#eee" stroke="#bbb" stroke-width="0.4"/><rect x="698.8" y="42.5" width="9" height="7" fill="#e2e2e2" stroke="#aaa" stroke-width="0.8"/><rect x="700.8" y="45" width="9" height="7.5" fill="#d8d8d8" stroke="#a0a0a0" stroke-width="0.8"/><rect x="716.8" y="43.5" width="10" height="8" fill="#dedede" stroke="#aaaaaa" stroke-width="0.9"/><rect x="717.3" y="44" width="9" height="1.8" fill="#c4c4c4"/><circle cx="725.3" cy="51" r="2" fill="#c6c6c6" stroke="#999" stroke-width="0.6"/><rect x="732.5" y="39.5" width="1" height="17" fill="#c3d0e2"/><rect x="733.5" y="39.5" width="1" height="17" fill="#fafcff"/><rect x="738.8" y="44.0" width="10" height="8" fill="#3c8ee6" stroke="#2a66b8" stroke-width="0.9"/><rect x="739.8" y="45.0" width="8" height="3" fill="#8cc4f4"/><polygon points="746.30,42.00 747.09,43.91 749.15,44.07 747.58,45.42 748.06,47.43 746.30,46.35 744.54,47.43 745.02,45.42 743.45,44.07 745.51,43.91" fill="#f5e626" stroke="#6a9a20" stroke-width="0.5"/><rect x="756.3" y="43.5" width="10" height="8" fill="#dedede" stroke="#aaaaaa" stroke-width="0.9"/><rect x="756.8" y="44" width="9" height="1.8" fill="#c4c4c4"/><circle cx="764.8" cy="51" r="2" fill="#c6c6c6" stroke="#999" stroke-width="0.6"/><rect x="774.2" y="43.5" width="10" height="8" fill="#dedede" stroke="#aaaaaa" stroke-width="0.9"/><rect x="774.7" y="44" width="9" height="1.8" fill="#c4c4c4"/><circle cx="782.7" cy="51" r="2" fill="#c6c6c6" stroke="#999" stroke-width="0.6"/><rect x="790" y="39.5" width="1" height="17" fill="#c3d0e2"/><rect x="791" y="39.5" width="1" height="17" fill="#fafcff"/><rect x="799" y="43.0" width="6" height="4" fill="#e0e0e0" stroke="#aaa" stroke-width="0.7"/><rect x="796.5" y="46.5" width="11" height="5.5" rx="1" fill="#cfcfcf" stroke="#a0a0a0" stroke-width="0.8"/><path d="M802,48.5 l4,4 M806,48.5 l-4,4" stroke="#999" stroke-width="1"/><path d="M1014,51 a3,3 0 0 1 1.5,-5.5 a4.5,4.5 0 0 1 8.5,-1 a3,3 0 0 1 2,6.5 Z" fill="#eaf3fc" stroke="#2f7ac8" stroke-width="1.1"/><path d="M1018,47.5 h5 M1020.5,48 v4.5" stroke="#2f7ac8" stroke-width="0.9"/><rect x="1080.6" y="46.3" width="11" height="6.4" fill="#eef5fc" stroke="#2f7ac8" stroke-width="1.1"/><circle cx="1084.2" cy="48.4" r="1.3" fill="#2f7ac8"/><path d="M1082,52.6 q0,-2.6 2.2,-2.6 q2.2,0 2.2,2.6 Z" fill="#2f7ac8"/><path d="M1087.5,46.5 q0.5,-3 3,-2.8 q1.8,0.4 1.2,2.6" stroke="#2f7ac8" stroke-width="1.1" fill="none"/><path d="M1086.6,45 l1.6,2.2 l1.4,-2.2 Z" fill="#2f7ac8"/><path d="M1098.6,44.6 h5 l3,3 v5.4 h-8 Z" fill="#f7f7f7" stroke="#ababab" stroke-width="1"/><path d="M1100.3,48 h3 M1100.3,50 h4" stroke="#c4c4c4" stroke-width="0.8"/><path d="M1104.5,46 q0.5,-3 3,-2.8 q1.8,0.4 1.2,2.6" stroke="#a8a8a8" stroke-width="1.1" fill="none"/><path d="M337,67.5 l-2.8,2.6 l2.8,2.6" stroke="#4a5670" stroke-width="1.3" fill="none"/><rect x="364.5" y="70.5" width="2" height="2.5" fill="#3cae3c"/><rect x="367" y="68.5" width="2" height="4.5" fill="#3cae3c"/><rect x="369.5" y="66.5" width="2" height="6.5" fill="#3cae3c"/><rect x="371.8" y="64.5" width="1.7" height="8.5" fill="#3cae3c"/><path d="M365,67.5 L370.5,72.5 H365 Z" fill="#e0a060" fill-opacity="0.75"/><rect x="373.8" y="62.5" width="1.4" height="10.5" fill="#e4e4e4" stroke="#a8a8a8" stroke-width="0.5"/><path d="M368.16,84.31 A3.9,3.9 0 1 0 373.39,84.99" fill="none" stroke="#1f9a1f" stroke-width="2.5"/><path d="M371.00,81.90 L375.60,82.10 L375.00,86.60 Z" fill="#5cc83c"/><rect x="386.8" y="82.8" width="9.6" height="9.6" rx="0.8" fill="url(#flop)"/><rect x="388.7" y="83.3" width="5.6" height="4" fill="#f4f4ff"/><rect x="389.3" y="89.1" width="4.4" height="3" fill="#1c1c3a"/><rect x="391.7" y="89.7" width="1.2" height="2" fill="#d8d8f0"/><rect x="403" y="79" width="1" height="17" fill="#c0cee2"/><rect x="404" y="79" width="1" height="17" fill="#f4f8fd"/><rect x="410.8" y="85.8" width="9" height="6.8" fill="#f4f6fa" stroke="#8090b0" stroke-width="0.9"/><rect x="412" y="87" width="6.6" height="4.6" fill="#d9a24a"/><rect x="412" y="90" width="6.6" height="1.6" fill="#5aa83a"/><path d="M416.5,86.5 q1.5,-2.5 4,-2.5 M419,83 l1.8,1 l-1.2,1.6" stroke="#3a78c8" stroke-width="1.1" fill="none"/><rect x="496.5" y="79" width="1" height="17" fill="#c0cee2"/><rect x="497.5" y="79" width="1" height="17" fill="#f4f8fd"/><path d="M591.5,87 h4 l-2,2.2 Z" fill="#556"/><path d="M724.5,87 h4 l-2,2.2 Z" fill="#556"/><path d="M742,89 l5,-5.5 l3.5,0 l0,3.5 l-5.5,5 Z" fill="#6a7fb0" stroke="#3a4a78" stroke-width="0.8"/><circle cx="748.5" cy="85" r="0.9" fill="#fff"/><path d="M747,92.5 q3,1 3.5,-3" stroke="#c85030" stroke-width="0.8" fill="none"/><path d="M815.5,81.5 h7 M815.5,93.5 h7 M815.5,81.5 v3 M822.5,81.5 v3 M815.5,93.5 v-3 M822.5,93.5 v-3" stroke="#6a88b8" stroke-width="1" fill="none"/><rect x="815.5" y="86" width="7" height="3" fill="none" stroke="#6a88b8" stroke-width="0.9"/><path d="M874.5,89.0 l4.5,4.5" stroke="#d07a2a" stroke-width="2.2"/><circle cx="872.5" cy="87.0" r="4" fill="#d8e8f8" stroke="#5a6a88" stroke-width="1.1"/><path d="M870.5,87.0 h4" stroke="#2a5aa8" stroke-width="1.1"/><path d="M872.5,85.0 v4" stroke="#2a5aa8" stroke-width="1.1"/><path d="M927.5,89.0 l4.5,4.5" stroke="#d07a2a" stroke-width="2.2"/><circle cx="925.5" cy="87.0" r="4" fill="#d8e8f8" stroke="#5a6a88" stroke-width="1.1"/><path d="M923.5,87.0 h4" stroke="#2a5aa8" stroke-width="1.1"/><path d="M1102.5,564.8 l2.2,2.2 l2.2,-2.2" stroke="#3a4658" stroke-width="1.2" fill="none"/></svg><svg width="1200" height="600" style="left:0;top:0;z-index:5"><rect x="105.5" y="83.9" width="10" height="9" fill="#f4f4f4" stroke="#b8b8b8" stroke-width="0.8"/><rect x="107.0" y="86.9" width="3.5" height="6" fill="#2c7be0"/><rect x="110.0" y="89.4" width="4" height="3.5" fill="#2c7be0"/><path d="M107.0,86.9 l1.7,-2 l1.8,2 Z" fill="#e03a3a"/><circle cx="106.8" cy="102.325" r="1.5" fill="#e8eef5" stroke="#9aa8b8" stroke-width="0.6"/><path d="M104.8,108.025 q0,-4 2,-4 q2,0 2,4 Z" fill="#eef2f6" stroke="#a8b4c0" stroke-width="0.6"/><rect x="105.8" y="96.92500000000001" width="10.6" height="1.9" rx="0.6" fill="#e5621e"/><rect x="105.8" y="97.525" width="1.5" height="2.2" fill="#e5621e"/><rect x="109.2" y="96.22500000000001" width="1.8" height="11.3" fill="#e5621e"/><circle cx="110.1" cy="107.22500000000001" r="1.4" fill="#e5621e"/><rect x="114.7" y="98.525" width="0.9" height="4.5" fill="#ee9a6a"/><rect x="114.3" y="102.625" width="1.8" height="2.2" fill="#6a6a6a"/><path d="M105.5,111.65 h4 l1,1.2 h5 v7.3 h-10 Z" fill="#f6dc8c" stroke="#c9a24a" stroke-width="0.8"/><rect x="105.5" y="113.65" width="10" height="6" fill="#fbe9a8" stroke="#c9a24a" stroke-width="0.6"/><rect x="108.5" y="114.65" width="7.5" height="5.5" fill="#fff" stroke="#3b78c8" stroke-width="0.9"/><rect x="108.5" y="114.65" width="7.5" height="1.5" fill="#3b78c8"/><path d="M105.5,125.275 h4 l1,1.2 h5 v7.3 h-10 Z" fill="#f6dc8c" stroke="#c9a24a" stroke-width="0.8"/><rect x="105.5" y="127.275" width="10" height="6" fill="#fbe9a8" stroke="#c9a24a" stroke-width="0.6"/><rect x="108.5" y="128.275" width="7.5" height="5.5" fill="#fff" stroke="#3b78c8" stroke-width="0.9"/><path d="M110.0,129.775 v3 h4 Z" fill="#d9a05a"/><rect x="121.3" y="138.4" width="10" height="8.5" fill="#fff" stroke="#4c86d6" stroke-width="1"/><path d="M122.8,140.4 L129.3,145.4 H122.8 Z" fill="#dca86a"/><rect x="121.3" y="152.025" width="10" height="8.5" fill="#fff" stroke="#4c86d6" stroke-width="1"/><path d="M122.8,154.025 L129.3,159.025 H122.8 Z" fill="#dca86a"/><circle cx="129.8" cy="160.32500000000002" r="2.1" fill="#19c019" stroke="#0e8a0e" stroke-width="0.3"/><rect x="136.7" y="173.15" width="2" height="2.5" fill="#3cae3c"/><rect x="139.2" y="171.15" width="2" height="4.5" fill="#3cae3c"/><rect x="141.7" y="169.15" width="2" height="6.5" fill="#3cae3c"/><rect x="144.0" y="167.15" width="1.7" height="8.5" fill="#3cae3c"/><path d="M137.2,170.15 L142.7,175.15 H137.2 Z" fill="#e0a060" fill-opacity="0.75"/><rect x="146.0" y="165.15" width="1.4" height="10.5" fill="#e4e4e4" stroke="#a8a8a8" stroke-width="0.5"/><rect x="139.2" y="178.775" width="6" height="4" fill="#dbeaf8" stroke="#7aa0c8" stroke-width="0.7"/><rect x="136.7" y="182.275" width="11" height="5" rx="1" fill="#d8d8d8" stroke="#8a8a8a" stroke-width="0.8"/><rect x="138.7" y="185.775" width="7" height="3" fill="#f2f2f2" stroke="#8a8a8a" stroke-width="0.6"/><path d="M152.3,192.4 h7 l2.5,2.5 v7.5 h-9.5 Z" fill="#fff" stroke="#444" stroke-width="0.8"/><rect x="153.3" y="193.4" width="6" height="6" fill="#2a3aa8"/><rect x="154.3" y="194.4" width="4" height="1" fill="#9db3ea"/><rect x="154.3" y="196.4" width="4" height="2" fill="#5a78d8"/><path d="M105.5,207.025 h4 l1,1.2 h5 v7.3 h-10 Z" fill="#f6dc8c" stroke="#c9a24a" stroke-width="0.8"/><rect x="105.5" y="209.025" width="10" height="6" fill="#fbe9a8" stroke="#c9a24a" stroke-width="0.6"/><rect x="108.5" y="210.025" width="7.5" height="5.5" fill="#fff" stroke="#3b78c8" stroke-width="0.9"/><path d="M110.0,211.525 v3 h4 Z" fill="#d9a05a"/><rect x="121.3" y="220.15" width="10" height="8.5" fill="#fff" stroke="#4c86d6" stroke-width="1"/><path d="M122.8,222.15 L129.3,227.15 H122.8 Z" fill="#dca86a"/><rect x="121.3" y="233.775" width="10" height="8.5" fill="#fff" stroke="#4c86d6" stroke-width="1"/><path d="M122.8,235.775 L129.3,240.775 H122.8 Z" fill="#dca86a"/><circle cx="129.8" cy="242.07500000000002" r="2.1" fill="#19c019" stroke="#0e8a0e" stroke-width="0.3"/><rect x="136.7" y="254.9" width="2" height="2.5" fill="#3cae3c"/><rect x="139.2" y="252.9" width="2" height="4.5" fill="#3cae3c"/><rect x="141.7" y="250.9" width="2" height="6.5" fill="#3cae3c"/><rect x="144.0" y="248.9" width="1.7" height="8.5" fill="#3cae3c"/><path d="M137.2,251.9 L142.7,256.9 H137.2 Z" fill="#e0a060" fill-opacity="0.75"/><rect x="146.0" y="246.9" width="1.4" height="10.5" fill="#e4e4e4" stroke="#a8a8a8" stroke-width="0.5"/><rect x="139.2" y="260.525" width="6" height="4" fill="#dbeaf8" stroke="#7aa0c8" stroke-width="0.7"/><rect x="136.7" y="264.025" width="11" height="5" rx="1" fill="#d8d8d8" stroke="#8a8a8a" stroke-width="0.8"/><rect x="138.7" y="267.525" width="7" height="3" fill="#f2f2f2" stroke="#8a8a8a" stroke-width="0.6"/><path d="M105.5,275.15 h4 l1,1.2 h5 v7.3 h-10 Z" fill="#f6dc8c" stroke="#c9a24a" stroke-width="0.8"/><rect x="105.5" y="277.15" width="10" height="6" fill="#fbe9a8" stroke="#c9a24a" stroke-width="0.6"/><path d="M108.0,277.15 h6 M111.0,276.65 v7 M109.5,283.65 h3" stroke="#e0702a" stroke-width="1.4" fill="none"/><circle cx="122.6" cy="293.075" r="1.5" fill="#e8eef5" stroke="#9aa8b8" stroke-width="0.6"/><path d="M120.6,298.775 q0,-4 2,-4 q2,0 2,4 Z" fill="#eef2f6" stroke="#a8b4c0" stroke-width="0.6"/><rect x="121.6" y="287.67499999999995" width="10.6" height="1.9" rx="0.6" fill="#e5621e"/><rect x="121.6" y="288.275" width="1.5" height="2.2" fill="#e5621e"/><rect x="125.0" y="286.97499999999997" width="1.8" height="11.3" fill="#e5621e"/><circle cx="125.89999999999999" cy="297.97499999999997" r="1.4" fill="#e5621e"/><rect x="130.5" y="289.275" width="0.9" height="4.5" fill="#ee9a6a"/><rect x="130.1" y="293.375" width="1.8" height="2.2" fill="#6a6a6a"/><circle cx="130.3" cy="296.575" r="2.1" fill="#19c019" stroke="#0e8a0e" stroke-width="0.3"/><path d="M105.5,302.4 h4 l1,1.2 h5 v7.3 h-10 Z" fill="#f6dc8c" stroke="#c9a24a" stroke-width="0.8"/><rect x="105.5" y="304.4" width="10" height="6" fill="#fbe9a8" stroke="#c9a24a" stroke-width="0.6"/><rect x="108.5" y="305.4" width="7.5" height="5.5" fill="#eef4fc" stroke="#3b78c8" stroke-width="0.9"/><path d="M109.5,309.4 l2,-2 l1.5,1 l2,-2" stroke="#3b78c8" stroke-width="0.6" fill="none"/><rect x="121.3" y="315.525" width="10" height="8.5" fill="#f4f8fd" stroke="#4c86d6" stroke-width="1"/><path d="M122.8,322.025 l2.5,-2.5 l1.5,1.2 l3,-3" stroke="#4c86d6" stroke-width="0.7" fill="none"/><circle cx="129.8" cy="323.825" r="2.1" fill="#19c019" stroke="#0e8a0e" stroke-width="0.3"/><rect x="121.3" y="329.15" width="10" height="8.5" fill="#f4f8fd" stroke="#4c86d6" stroke-width="1"/><path d="M122.8,335.65 l2.5,-2.5 l1.5,1.2 l3,-3" stroke="#4c86d6" stroke-width="0.7" fill="none"/><path d="M105.5,343.275 h4 l1,1.2 h5 v7.3 h-10 Z" fill="#f6dc8c" stroke="#c9a24a" stroke-width="0.8"/><rect x="105.5" y="345.275" width="10" height="6" fill="#fbe9a8" stroke="#c9a24a" stroke-width="0.6"/><rect x="108.5" y="346.275" width="7.5" height="5.5" fill="#4f9be6" stroke="#2f6fc0" stroke-width="0.8"/><rect x="121.3" y="356.4" width="10" height="8.5" fill="#4e9ae6" stroke="#2f72c4" stroke-width="1"/><rect x="122.3" y="357.4" width="8" height="2.5" fill="#9ccaf5"/><circle cx="129.8" cy="364.7" r="2.1" fill="#19c019" stroke="#0e8a0e" stroke-width="0.3"/></svg>
</body></html>
